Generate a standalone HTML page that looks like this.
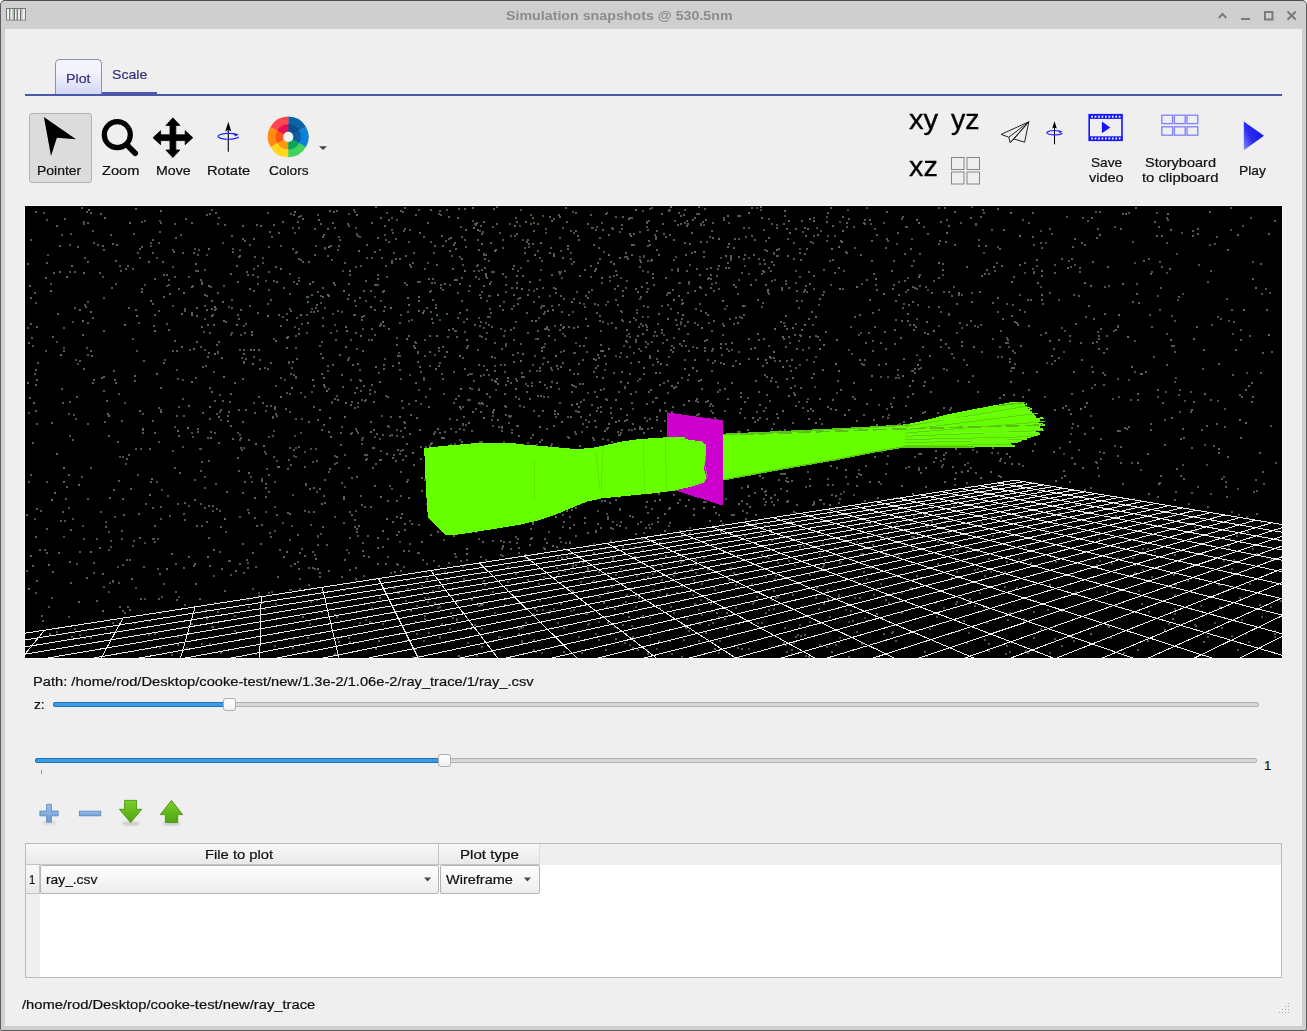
<!DOCTYPE html>
<html><head><meta charset="utf-8"><title>Simulation snapshots</title>
<style>

html,body{margin:0;padding:0;background:#ffffff;}
body{width:1307px;height:1031px;overflow:hidden;font-family:"Liberation Sans", sans-serif;}
#win{position:absolute;left:0;top:0;width:1307px;height:1031px;box-sizing:border-box;background:#cfcfcf;border:1px solid #5c5c5c;border-top-color:#4f4f4f;border-radius:5px 5px 2px 2px;overflow:hidden;}
#win *{box-sizing:border-box;}
.a{position:absolute;}
.t{position:absolute;white-space:nowrap;transform-origin:0 50%;}
#content{position:absolute;left:4px;top:28px;width:1297px;height:997px;background:#efefef;}
svg{position:absolute;overflow:visible;}

</style></head>
<body>
<div id="win">
<div class="a" style="left:-1px;top:-1px;width:1307px;height:1031px">
<div class="a" style="left:5px;top:29px;width:1297px;height:997px;background:#efefef"></div>
<svg style="left:6px;top:8px" width="20" height="13" viewBox="0 0 20 13">
<rect x="0.5" y="0.5" width="19" height="11.5" fill="#e9e9e9" stroke="#777" stroke-width="1"/>
<rect x="1.2" y="1" width="1.8" height="10.5" fill="#f4f2f6"/>
<rect x="3.1" y="0.5" width="1.4" height="11.5" fill="#74708a"/>
<rect x="4.6" y="1" width="1.6" height="10.5" fill="#f0ece8"/>
<rect x="6.2" y="1" width="1.5" height="10.5" fill="#a8d8a8"/>
<rect x="7.7" y="0.5" width="1.3" height="11.5" fill="#6c6c6c"/>
<rect x="9.2" y="1" width="1.4" height="10.5" fill="#eee"/>
<rect x="10.6" y="0.5" width="1.6" height="11.5" fill="#8a708a"/>
<rect x="12.3" y="1" width="1.6" height="10.5" fill="#f1eef1"/>
<rect x="14" y="0.5" width="1.3" height="11.5" fill="#6e6e6e"/>
<rect x="15.4" y="1" width="1.5" height="10.5" fill="#c4cad8"/>
<rect x="17" y="1" width="1.8" height="10.5" fill="#f2eee8"/>
</svg>
<svg style="left:1210px;top:5px" width="92" height="20" viewBox="1210 5 92 20" fill="none" stroke="#7b7b7b" stroke-width="2">
<path d="M1218.7 18 L1222.5 14 L1226.3 18" stroke-linecap="butt"/>
<path d="M1241 19 H1250"/>
<rect x="1265" y="12" width="7.5" height="7.5"/>
<path d="M1287.5 11.5 L1295.8 19.8 M1295.8 11.5 L1287.5 19.8"/>
</svg>
<div class="a" style="left:25px;top:94px;width:1257px;height:2px;background:#4a56a8"></div>
<div class="a" style="left:102px;top:92px;width:55px;height:2px;background:#4a56a8"></div>
<div class="a" style="left:55px;top:59px;width:47px;height:35px;border:1px solid #8d8fb4;border-bottom:none;border-radius:5px 5px 0 0;background:linear-gradient(#f5f5fd 0%,#f1f1fc 40%,#d4d7f4 100%)"></div>
<div class="a" style="left:29px;top:113px;width:63px;height:70px;border:1px solid #b4b4b4;border-radius:3px;background:#dcdcdc"></div>
<div class="a" style="left:24px;top:205px;width:1259px;height:454px;background:#fbfbfb"></div>
<svg style="left:0;top:0" width="1307" height="200" viewBox="0 0 1307 200">
<defs><filter id="blur1" x="-10%" y="-10%" width="120%" height="120%"><feGaussianBlur stdDeviation="0.75"/></filter></defs>
<path d="M43.9 117.1 L76 139.2 L56.9 137.8 L51 156.1 Z" fill="#000" filter="url(#blur1)"/>
<circle cx="117.3" cy="134.7" r="13" fill="none" stroke="#000" stroke-width="5.2"/>
<path d="M127 145 L135.2 153.2" stroke="#000" stroke-width="5.6" stroke-linecap="round"/>
<path d="M172.9 117.8 L179.9 125.4 L175.8 125.4 L175.8 134.8 L185.2 134.8 L185.2 130.7 L192.8 137.7 L185.2 144.7 L185.2 140.6 L175.8 140.6 L175.8 150.0 L179.9 150.0 L172.9 157.6 L165.9 150.0 L170.0 150.0 L170.0 140.6 L160.6 140.6 L160.6 144.7 L153.0 137.7 L160.6 130.7 L160.6 134.8 L170.0 134.8 L170.0 125.4 L165.9 125.4 Z" fill="#000" stroke="#000" stroke-width="0.8" stroke-linejoin="round"/>
<g>
<path d="M228.3 151.8 V126" stroke="#000" stroke-width="1.1"/>
<path d="M228.3 121.8 L231.3 131.5 L228.3 129.8 L225.3 131.5 Z" fill="#000"/>
<path d="M235.5 134.2 A10.4 2.9 0 1 0 238.7 136.9" fill="none" stroke="#2222ff" stroke-width="1.2"/>
<path d="M233 132.8 L238.9 134.6 L235.2 136.6 Z" fill="#2222ff"/>
</g>

<path d="M288.2 136.9 L288.20 116.50 A20.4 20.4 0 0 1 305.96 126.85 Z" fill="#0b62a8"/>
<path d="M288.2 136.9 L305.87 126.70 A20.4 20.4 0 0 1 305.78 147.25 Z" fill="#0d80d8"/>
<path d="M288.2 136.9 L305.87 147.10 A20.4 20.4 0 0 1 288.02 157.30 Z" fill="#41d45c"/>
<path d="M288.2 136.9 L288.20 157.30 A20.4 20.4 0 0 1 270.44 146.95 Z" fill="#ffd81c"/>
<path d="M288.2 136.9 L270.53 147.10 A20.4 20.4 0 0 1 270.62 126.55 Z" fill="#ff8c0f"/>
<path d="M288.2 136.9 L270.53 126.70 A20.4 20.4 0 0 1 288.38 116.50 Z" fill="#ff4650"/>
<path d="M288.2 136.9 L288.20 124.30 A12.6 12.6 0 0 1 299.17 130.70 Z" fill="#0c4f88"/>
<path d="M288.2 136.9 L299.11 130.60 A12.6 12.6 0 0 1 299.06 143.29 Z" fill="#0d5fa0"/>
<path d="M288.2 136.9 L299.11 143.20 A12.6 12.6 0 0 1 288.09 149.50 Z" fill="#10a35a"/>
<path d="M288.2 136.9 L288.20 149.50 A12.6 12.6 0 0 1 277.23 143.10 Z" fill="#ff9a10"/>
<path d="M288.2 136.9 L277.29 143.20 A12.6 12.6 0 0 1 277.34 130.51 Z" fill="#ff5418"/>
<path d="M288.2 136.9 L277.29 130.60 A12.6 12.6 0 0 1 288.31 124.30 Z" fill="#e61050"/>
<circle cx="288.2" cy="136.9" r="5.1" fill="#f4f4f4"/>
<path d="M319 146.3 L327 146.3 L323 150 Z" fill="#444"/>
</svg>
<svg style="left:0;top:0" width="1307" height="200" viewBox="0 0 1307 200">
<rect x="951.5" y="157.5" width="12.5" height="12" fill="none" stroke="#858585" stroke-width="1"/>
<rect x="967.0" y="157.5" width="12.5" height="12" fill="none" stroke="#858585" stroke-width="1"/>
<rect x="951.5" y="172.0" width="12.5" height="12" fill="none" stroke="#858585" stroke-width="1"/>
<rect x="967.0" y="172.0" width="12.5" height="12" fill="none" stroke="#858585" stroke-width="1"/>
<path d="M1028.8 121.8 L1001 134.4 L1008.8 137.2 L1010.2 142.6 L1014 139 L1024.6 142.2 Z M1028.8 121.8 L1008.8 137.2 M1028.8 121.8 L1010.2 142.6 M1028.8 121.8 L1014 139" fill="none" stroke="#222" stroke-width="1" stroke-linejoin="round"/>
<path d="M1054.5 144.3 V125" stroke="#000" stroke-width="1"/>
<path d="M1054.5 121.3 L1056.8 128.6 L1054.5 127.4 L1052.2 128.6 Z" fill="#000"/>
<path d="M1060 131.2 A7.9 2.1 0 1 0 1062.4 133.2" fill="none" stroke="#2222ff" stroke-width="1.1"/>
<path d="M1058 130.2 L1062.6 131.6 L1059.8 133.2 Z" fill="#2222ff"/>
<rect x="1089.2" y="114.7" width="32.8" height="25.6" fill="none" stroke="#1414ff" stroke-width="1.6"/>
<rect x="1089" y="114.5" width="33.2" height="4.4" fill="#1414ff"/><rect x="1089" y="136.3" width="33.2" height="4.4" fill="#1414ff"/>
<rect x="1091.20" y="115.7" width="1.7" height="2" fill="#eef"/><rect x="1091.20" y="137.5" width="1.7" height="2" fill="#eef"/>
<rect x="1094.65" y="115.7" width="1.7" height="2" fill="#eef"/><rect x="1094.65" y="137.5" width="1.7" height="2" fill="#eef"/>
<rect x="1098.10" y="115.7" width="1.7" height="2" fill="#eef"/><rect x="1098.10" y="137.5" width="1.7" height="2" fill="#eef"/>
<rect x="1101.55" y="115.7" width="1.7" height="2" fill="#eef"/><rect x="1101.55" y="137.5" width="1.7" height="2" fill="#eef"/>
<rect x="1105.00" y="115.7" width="1.7" height="2" fill="#eef"/><rect x="1105.00" y="137.5" width="1.7" height="2" fill="#eef"/>
<rect x="1108.45" y="115.7" width="1.7" height="2" fill="#eef"/><rect x="1108.45" y="137.5" width="1.7" height="2" fill="#eef"/>
<rect x="1111.90" y="115.7" width="1.7" height="2" fill="#eef"/><rect x="1111.90" y="137.5" width="1.7" height="2" fill="#eef"/>
<rect x="1115.35" y="115.7" width="1.7" height="2" fill="#eef"/><rect x="1115.35" y="137.5" width="1.7" height="2" fill="#eef"/>
<rect x="1118.80" y="115.7" width="1.7" height="2" fill="#eef"/><rect x="1118.80" y="137.5" width="1.7" height="2" fill="#eef"/>
<path d="M1101.9 121.5 L1110.3 127.4 L1101.9 133.3 Z" fill="#1414ff"/>
<rect x="1161.8" y="115.2" width="10.8" height="8.4" fill="none" stroke="#6c6cff" stroke-width="1.3" opacity="0.85"/>
<rect x="1174.4" y="115.2" width="10.8" height="8.4" fill="none" stroke="#6c6cff" stroke-width="1.3" opacity="0.85"/>
<rect x="1187.0" y="115.2" width="10.8" height="8.4" fill="none" stroke="#6c6cff" stroke-width="1.3" opacity="0.85"/>
<rect x="1161.8" y="126.8" width="10.8" height="8.4" fill="none" stroke="#6c6cff" stroke-width="1.3" opacity="0.85"/>
<rect x="1174.4" y="126.8" width="10.8" height="8.4" fill="none" stroke="#6c6cff" stroke-width="1.3" opacity="0.85"/>
<rect x="1187.0" y="126.8" width="10.8" height="8.4" fill="none" stroke="#6c6cff" stroke-width="1.3" opacity="0.85"/>
<defs><linearGradient id="pg" x1="1" y1="0.3" x2="0" y2="1"><stop offset="0" stop-color="#1515f5"/><stop offset="0.55" stop-color="#2a2af0"/><stop offset="1" stop-color="#8a8af8"/></linearGradient></defs>
<path d="M1243.8 121.5 L1264 135.8 L1243.8 150.2 Z" fill="url(#pg)"/>
</svg>
<div class="a" style="left:53px;top:702px;width:1206px;height:5px;border:1px solid #b2b2b2;border-radius:2px;background:linear-gradient(#d0d0d0,#dedede)"></div>
<div class="a" style="left:53px;top:702px;width:176px;height:5px;border:1px solid #2273b5;border-radius:2px;background:#3d9ae4"></div>
<div class="a" style="left:223px;top:698px;width:13px;height:13px;border:1px solid #aeaeae;border-radius:3px;background:linear-gradient(#ffffff,#f0f0f0)"></div>
<div class="a" style="left:35px;top:758px;width:1222px;height:5px;border:1px solid #b2b2b2;border-radius:2px;background:linear-gradient(#d0d0d0,#dedede)"></div>
<div class="a" style="left:35px;top:758px;width:409px;height:5px;border:1px solid #2273b5;border-radius:2px;background:#3d9ae4"></div>
<div class="a" style="left:438px;top:754px;width:13px;height:13px;border:1px solid #aeaeae;border-radius:3px;background:linear-gradient(#ffffff,#f0f0f0)"></div>
<div class="a" style="left:41px;top:770px;width:1px;height:4px;background:#999"></div>
<svg style="left:0;top:795px" width="200" height="35" viewBox="0 795 200 35">
<defs>
<linearGradient id="bl" x1="0" y1="0" x2="0" y2="1"><stop offset="0" stop-color="#9fc0e6"/><stop offset="1" stop-color="#6f9bd2"/></linearGradient>
<linearGradient id="gr" x1="0" y1="0" x2="0" y2="1"><stop offset="0" stop-color="#7ccf2a"/><stop offset="1" stop-color="#4fa512"/></linearGradient>
<filter id="sh" x="-20%" y="-20%" width="140%" height="160%"><feGaussianBlur stdDeviation="1.2"/></filter>
</defs>
<ellipse cx="49" cy="823" rx="7" ry="1.6" fill="#000" opacity="0.12" filter="url(#sh)"/>
<ellipse cx="130.6" cy="823.5" rx="9" ry="1.8" fill="#000" opacity="0.18" filter="url(#sh)"/>
<ellipse cx="171.5" cy="823.5" rx="9" ry="1.8" fill="#000" opacity="0.18" filter="url(#sh)"/>
<path d="M46.6 804.3 H51.4 V811.1 H58.2 V815.8 H51.4 V822.1 H46.6 V815.8 H39.9 V811.1 H46.6 Z" fill="url(#bl)" stroke="#5d8bc8" stroke-width="0.9"/>
<rect x="79.4" y="811.2" width="21.3" height="4.6" fill="url(#bl)" stroke="#5d8bc8" stroke-width="0.9"/>
<path d="M124.6 800.4 H136.6 V809.3 H141.8 L130.6 822.6 L119.4 809.3 H124.6 Z" fill="url(#gr)" stroke="#4a9410" stroke-width="0.9" stroke-linejoin="round"/>
<path d="M171.5 800.4 L182.7 814.6 H177.7 V822.4 H165.4 V814.6 H160.3 Z" fill="url(#gr)" stroke="#4a9410" stroke-width="0.9" stroke-linejoin="round"/>
</svg>
<div class="a" style="left:25px;top:843px;width:1257px;height:135px;border:1px solid #b9b9b9;background:#fff"></div>
<div class="a" style="left:26px;top:844px;width:1255px;height:21px;background:#efefef"></div>
<div class="a" style="left:26px;top:844px;width:413px;height:21px;background:linear-gradient(#f8f8f8,#e9e9e9);border-right:1px solid #c4c4c4;border-bottom:1px solid #c4c4c4"></div>
<div class="a" style="left:439px;top:844px;width:101px;height:21px;background:linear-gradient(#f8f8f8,#e9e9e9);border-right:1px solid #dcdcdc;border-bottom:1px solid #c4c4c4"></div>
<div class="a" style="left:26px;top:865px;width:14px;height:112px;background:#efefef"></div>
<div class="a" style="left:26px;top:865px;width:14px;height:29px;background:linear-gradient(#f8f8f8,#e9e9e9);border-right:1px solid #c4c4c4;border-bottom:1px solid #c4c4c4"></div>
<div class="a" style="left:40px;top:865px;width:399px;height:29px;border:1px solid #b3b3b3;border-radius:2px;background:linear-gradient(#ffffff,#ededed)"></div>
<div class="a" style="left:440px;top:865px;width:100px;height:29px;border:1px solid #b3b3b3;border-radius:2px;background:linear-gradient(#ffffff,#ededed)"></div>
<svg style="left:420px;top:875px" width="120" height="10" viewBox="420 875 120 10"><path d="M424 877.6 H431.2 L427.6 881.4 Z M523.8 877.6 H531 L527.4 881.4 Z" fill="#4a4a4a"/></svg>
<svg style="left:0;top:0" width="1307" height="1031" viewBox="0 0 1307 1031" pointer-events="none"><rect x="1288" y="1003" width="1" height="1" fill="#a8a8a8"/><rect x="1285" y="1006" width="1" height="1" fill="#a8a8a8"/><rect x="1288" y="1006" width="1" height="1" fill="#a8a8a8"/><rect x="1282" y="1009" width="1" height="1" fill="#a8a8a8"/><rect x="1285" y="1009" width="1" height="1" fill="#a8a8a8"/><rect x="1288" y="1009" width="1" height="1" fill="#a8a8a8"/><rect x="1279" y="1012" width="1" height="1" fill="#a8a8a8"/><rect x="1282" y="1012" width="1" height="1" fill="#a8a8a8"/><rect x="1285" y="1012" width="1" height="1" fill="#a8a8a8"/><rect x="1288" y="1012" width="1" height="1" fill="#a8a8a8"/></svg>

<svg style="left:25px;top:206px;overflow:hidden" width="1257" height="452" viewBox="0 0 1257 452" shape-rendering="crispEdges">
<rect x="0" y="0" width="1257" height="452" fill="#000"/>
<path d="M663 77h2M457 322h2M309 118h2M652 64h2M902 83h2M319 280h2M214 43h2M871 37h2M623 318h2M995 201h2M876 386h2M430 192h2M794 133h2M383 114h2M743 139h2M364 229h2M943 395h2M617 64h2M748 46h2M1036 121h2M166 226h2M270 250h2M552 205h2M508 84h2M1086 357h2M1157 87h2M58 15h2M478 235h2M374 335h2M872 347h2M285 242h2M356 51h2M863 396h2M378 215h2M520 26h2M167 79h2M706 143h2M774 42h2M114 51h2M749 73h2M934 247h2M638 128h2M656 417h2M510 445h2M664 221h2M929 324h2M544 347h2M205 128h2M880 199h2M814 431h2M921 319h2M450 202h2M586 21h2M483 278h2M503 40h2M612 443h2M309 249h2M203 100h2M10 96h2M526 237h2M57 319h2M31 135h2M547 5h2M839 411h2M517 9h2M656 171h2M699 102h2M412 401h2M330 304h2M503 83h2M479 124h2M624 2h2M495 61h2M332 200h2M295 96h2M286 102h2M248 132h2M393 3h2M667 140h2M355 118h2M972 246h2M167 230h2M1205 23h2M1148 139h2M354 43h2M980 447h2M865 197h2M116 15h2M1141 66h2M384 337h2M131 51h2M1149 407h2M1165 185h2M443 262h2M885 317h2M373 146h2M562 186h2M44 38h2M913 119h2M510 132h2M179 143h2M1113 384h2M483 216h2M141 79h2M51 357h2M331 224h2M568 337h2M594 150h2M523 325h2M678 18h2M272 355h2M233 386h2M47 115h2M292 329h2M570 427h2M547 105h2M891 112h2M467 206h2M65 431h2M593 290h2M809 29h2M414 113h2M92 360h2M302 164h2M107 62h2M315 414h2M311 124h2M170 64h2M838 320h2M1046 221h2M1024 446h2M446 167h2M404 159h2M1149 175h2M1021 156h2M384 23h2M268 249h2M1185 287h2M751 18h2M952 344h2M2 121h2M604 130h2M3 206h2M1109 134h2M511 164h2M1163 297h2M782 419h2M179 112h2M915 254h2M795 316h2M656 380h2M267 288h2M459 245h2M1066 181h2M9 312h2M507 158h2M136 390h2M1008 65h2M409 148h2M719 99h2M1157 258h2M874 294h2M488 133h2M240 74h2M1085 431h2M579 239h2M264 102h2M330 99h2M536 71h2M546 365h2M550 136h2M972 40h2M492 64h2M453 64h2M307 107h2M360 189h2M461 126h2M618 50h2M317 64h2M820 45h2M392 346h2M573 415h2M654 76h2M846 319h2M1063 311h2M363 220h2M1048 310h2M470 183h2M112 268h2M657 276h2M781 153h2M789 180h2M470 251h2M972 150h2M270 241h2M727 397h2M740 370h2M485 209h2M636 99h2M617 268h2M1015 128h2M917 258h2M932 174h2M777 25h2M861 257h2M611 103h2M684 199h2M398 434h2M999 66h2M524 89h2M349 90h2M174 242h2M829 41h2M467 219h2M413 381h2M273 71h2M99 196h2M841 1h2M891 148h2M961 416h2M1039 124h2M218 156h2M1074 245h2M136 283h2M746 393h2M572 304h2M295 147h2M655 356h2M637 136h2M390 442h2M271 45h2M818 285h2M399 391h2M43 301h2M1087 192h2M456 292h2M876 12h2M828 288h2M497 33h2M622 447h2M788 155h2M356 209h2M1181 258h2M169 42h2M257 316h2M882 71h2M1063 371h2M723 21h2M673 282h2M480 289h2M121 442h2M572 98h2M418 333h2M860 267h2M347 396h2M1249 424h2M349 230h2M176 75h2M1159 194h2M280 278h2M490 115h2M469 151h2M599 50h2M454 24h2M653 259h2M784 415h2M954 386h2M1015 24h2M981 131h2M535 145h2M529 133h2M1071 256h2M736 100h2M50 153h2M323 7h2M585 344h2M541 255h2M886 32h2M316 105h2M880 85h2M292 330h2M264 67h2M519 137h2M412 314h2M197 36h2M1109 56h2M604 438h2M331 28h2M633 434h2M671 7h2M84 376h2M456 85h2M1156 26h2M311 256h2M321 343h2M299 42h2M461 199h2M614 50h2M332 196h2M522 190h2M1192 194h2M164 143h2M815 287h2M656 112h2M384 168h2M693 446h2M604 140h2M468 65h2M822 3h2M622 110h2M303 182h2M958 46h2M311 189h2M719 59h2M251 254h2M338 369h2M1074 354h2M997 259h2M437 360h2M1093 190h2M631 442h2M188 165h2M933 239h2M281 126h2M447 14h2M151 163h2M240 247h2M466 213h2M607 202h2M580 98h2M80 315h2M454 197h2M264 383h2M782 192h2M712 441h2M749 372h2M396 379h2M598 139h2M434 233h2M181 48h2M1204 332h2M359 28h2M275 186h2M366 282h2M371 13h2M782 265h2M1017 97h2M1175 399h2M52 157h2M215 128h2M947 243h2M793 98h2M917 68h2M248 224h2M650 264h2M514 394h2M1203 114h2M465 75h2M715 202h2M395 197h2M87 375h2M1115 263h2M836 338h2M770 117h2M1045 227h2M710 154h2M494 19h2M110 381h2M829 391h2M216 151h2M1007 62h2M855 342h2M432 395h2M713 73h2M515 63h2M340 94h2M94 250h2M617 4h2M157 173h2M535 65h2M340 413h2M713 145h2M571 20h2M823 143h2M736 416h2M200 325h2M155 28h2M1141 11h2M391 399h2M299 101h2M921 209h2M946 0h2M416 167h2M520 22h2M670 398h2M655 284h2M222 356h2M685 204h2M1020 36h2M994 88h2M431 394h2M788 11h2M414 312h2M603 127h2M590 368h2M582 117h2M1132 190h2M1092 172h2M371 357h2M279 245h2M228 196h2M624 411h2M636 328h2M1048 88h2M58 332h2M249 324h2M257 110h2M306 195h2M701 142h2M826 147h2M855 277h2M558 97h2M266 319h2M833 263h2M801 10h2M833 128h2M746 334h2M492 92h2M268 75h2M227 382h2M855 331h2M856 245h2M882 83h2M36 28h2M147 99h2M943 426h2M195 213h2M550 257h2M486 223h2M601 74h2M393 183h2M840 229h2M269 229h2M1011 59h2M226 275h2M701 99h2M723 67h2M545 404h2M267 21h2M135 203h2M384 314h2M648 406h2M550 180h2M429 237h2M790 150h2M764 136h2M83 385h2M720 30h2M590 149h2M629 378h2M853 198h2M618 49h2M354 232h2M579 163h2M617 110h2M375 244h2M306 196h2M703 16h2M588 69h2M533 182h2M1015 80h2M323 346h2M632 117h2M654 324h2M479 257h2M723 442h2M419 365h2M463 168h2M416 324h2M612 272h2M424 78h2M688 242h2M1198 270h2M516 446h2M265 359h2M1206 305h2M475 250h2M1212 282h2M119 336h2M1207 127h2M389 135h2M119 392h2M612 174h2M480 139h2M147 60h2M627 158h2M458 47h2M1151 47h2M739 43h2M675 393h2M744 242h2M38 330h2M408 354h2M686 77h2M43 410h2M1103 173h2M457 25h2M561 259h2M341 252h2M276 117h2M134 14h2M1221 166h2M823 415h2M584 74h2M1038 247h2M537 127h2M836 77h2M518 370h2M275 226h2M1150 171h2M1155 344h2M773 195h2M526 421h2M802 272h2M753 238h2M453 111h2M755 282h2M983 140h2M942 256h2M1038 145h2M1179 238h2M1198 354h2M966 246h2M872 226h2M312 43h2M814 15h2M656 139h2M500 177h2M240 204h2M682 363h2M655 115h2M1065 209h2M153 390h2M442 168h2M731 1h2M795 24h2M563 275h2M22 48h2M638 356h2M269 120h2M595 71h2M535 335h2M738 292h2M820 403h2M1244 86h2M119 78h2M513 111h2M420 313h2M464 110h2M1152 93h2M1041 10h2M812 236h2M362 332h2M25 77h2M695 51h2M264 205h2M77 70h2M431 412h2M963 444h2M811 186h2M1049 58h2" stroke="#474d4d" stroke-width="2" fill="none" transform="translate(0,1)"/>
<path d="M593 214h2M762 49h2M703 373h2M311 250h2M191 138h2M715 186h2M810 237h2M352 72h2M249 200h2M508 258h2M613 155h2M540 1h2M1030 274h2M499 46h2M458 79h2M405 3h2M906 86h2M573 41h2M648 141h2M481 382h2M1039 269h2M1122 247h2M486 81h2M926 89h2M535 118h2M434 200h2M219 126h2M588 244h2M110 2h2M609 222h2M641 133h2M430 350h2M782 204h2M656 245h2M404 253h2M649 365h2M249 439h2M813 61h2M526 163h2M660 421h2M359 100h2M1193 157h2M458 316h2M746 55h2M349 185h2M844 93h2M248 74h2M346 16h2M595 202h2M687 206h2M636 7h2M657 96h2M508 433h2M344 183h2M519 122h2M322 153h2M1047 217h2M463 277h2M918 201h2M294 139h2M264 307h2M431 73h2M467 205h2M609 350h2M648 33h2M493 422h2M941 60h2M416 29h2M423 264h2M457 335h2M335 184h2M621 76h2M1095 256h2M541 15h2M503 37h2M357 417h2M675 35h2M701 422h2M298 171h2M513 377h2M591 68h2M633 48h2M736 11h2M931 395h2M894 68h2M776 14h2M949 399h2M27 365h2M622 39h2M1097 7h2M515 189h2M538 445h2M835 48h2M616 332h2M39 12h2M406 76h2M171 135h2M975 270h2M887 80h2M331 325h2M291 98h2M117 223h2M294 282h2M78 43h2M273 52h2M910 244h2M329 313h2M530 82h2M1207 168h2M58 162h2M600 363h2M861 5h2M421 263h2M459 52h2M323 77h2M327 158h2M495 421h2M339 300h2M469 174h2M248 18h2M435 354h2M570 153h2M193 135h2M408 227h2M352 331h2M628 78h2M103 101h2M1064 305h2M620 300h2M562 326h2M817 236h2M1139 238h2M1117 342h2M673 434h2M212 251h2M1109 358h2M599 214h2M984 155h2M702 192h2M841 372h2M876 114h2M560 272h2M410 101h2M740 350h2M1191 217h2M1060 110h2M672 118h2M96 214h2M427 411h2M185 225h2M809 253h2M663 144h2M1057 261h2M263 155h2M240 290h2M89 173h2M1134 276h2M642 112h2M713 50h2M381 237h2M74 341h2M714 9h2M608 38h2M478 129h2M54 345h2M523 406h2M867 82h2M466 120h2M536 293h2M1038 264h2M455 91h2M732 127h2M90 176h2M1116 397h2M425 267h2M719 195h2M920 35h2M213 50h2M1116 167h2M734 198h2M288 105h2M439 162h2M878 215h2M974 191h2M336 113h2M799 353h2M65 6h2M946 95h2M253 108h2M684 314h2M267 155h2M695 357h2M252 260h2M41 280h2M322 92h2M689 383h2M771 142h2M175 264h2M151 144h2M1075 122h2M98 308h2M358 158h2M989 215h2M1220 183h2M961 63h2M316 168h2M602 52h2M886 59h2M844 13h2M146 347h2M884 118h2M659 162h2M402 16h2M926 147h2M838 365h2M511 252h2M184 437h2M783 112h2M813 390h2M815 34h2M569 64h2M644 86h2M451 16h2M288 281h2M705 344h2M689 154h2M960 286h2M592 225h2M705 51h2M904 149h2M1112 193h2M138 68h2M535 276h2M506 331h2M952 297h2M1109 366h2M535 89h2M759 119h2M511 247h2M995 222h2M514 235h2M524 404h2M21 322h2M1063 99h2M584 70h2M231 319h2M608 27h2M283 361h2M680 106h2M493 229h2M115 392h2M546 178h2M377 5h2M485 250h2M881 234h2M502 298h2M350 0h2M562 119h2M882 107h2M984 406h2M930 266h2M250 207h2M1151 262h2M526 68h2M346 178h2M893 263h2M678 45h2M600 395h2M1067 136h2M857 229h2M206 29h2M236 274h2M384 227h2M75 7h2M538 342h2M186 102h2M409 39h2M774 46h2M1053 89h2M360 357h2M268 243h2M209 424h2M312 432h2M722 223h2M508 24h2M159 102h2M1002 446h2M1167 29h2M507 37h2M292 338h2M615 315h2M748 151h2M1158 352h2M614 220h2M769 358h2M650 180h2M813 435h2M1005 356h2M68 173h2M288 305h2M790 129h2M784 279h2M176 77h2M288 200h2M553 157h2M414 431h2M769 128h2M805 202h2M586 235h2M604 115h2M821 46h2M916 311h2M766 230h2M514 161h2M355 253h2M686 404h2M778 243h2M28 66h2M380 49h2M471 172h2M144 87h2M911 410h2M514 164h2M648 260h2M183 146h2M783 212h2M676 211h2M740 406h2M502 88h2M959 433h2M534 10h2M1046 187h2M646 256h2M213 203h2M514 175h2M337 144h2M761 172h2M600 258h2M521 122h2M284 417h2M483 209h2M797 360h2M882 190h2M663 168h2M873 88h2M685 197h2M283 378h2M810 203h2M546 303h2M528 81h2M117 226h2M541 350h2M390 415h2M494 285h2M338 179h2M153 229h2M1070 255h2M944 392h2M62 16h2M642 98h2M437 217h2M550 24h2M625 257h2M477 340h2M301 338h2M245 156h2M343 350h2M392 146h2M538 421h2M547 359h2M937 323h2M325 227h2M617 409h2M667 13h2M798 297h2M1095 22h2M597 10h2M1100 7h2M133 392h2M331 181h2M836 437h2M892 391h2M796 249h2M948 206h2M705 361h2M337 344h2M733 52h2M532 416h2M1226 176h2M1227 190h2M363 35h2M627 67h2M168 46h2M618 251h2M731 390h2M530 86h2M341 38h2M238 395h2M362 190h2M1132 183h2M468 446h2M906 315h2M379 323h2M475 271h2M203 205h2M348 195h2M47 233h2M695 325h2M319 56h2M490 367h2M1067 165h2M941 118h2M309 192h2M827 190h2M1213 308h2M469 283h2M847 144h2M629 348h2M983 385h2M480 208h2M1169 320h2M223 400h2M413 359h2M452 305h2M214 233h2M577 171h2M358 104h2M36 182h2M298 28h2M205 187h2M841 73h2M797 163h2M302 159h2M889 162h2M622 306h2M915 15h2M84 291h2M67 111h2M488 155h2M579 149h2M288 179h2M888 309h2M663 424h2M571 106h2M989 115h2M912 335h2M215 103h2M390 176h2M705 49h2M581 193h2M81 194h2M953 285h2M923 107h2M486 102h2M331 322h2M394 160h2M578 450h2M627 195h2M354 175h2M729 286h2M1003 119h2M559 100h2M662 127h2M302 22h2M555 210h2M589 82h2M444 318h2M511 404h2M765 314h2M631 213h2M975 311h2M557 177h2M1073 142h2M352 357h2M1093 299h2M283 55h2M558 370h2M1036 439h2M1132 290h2M567 375h2M602 176h2M552 29h2M574 109h2M492 146h2M917 218h2M1011 165h2M268 8h2M702 56h2M897 140h2M252 370h2M460 69h2M34 39h2M431 130h2M525 161h2M906 301h2M594 51h2M621 123h2M1118 54h2M491 219h2M502 373h2M851 352h2M323 88h2M1056 153h2M279 349h2M957 3h2M548 92h2M752 180h2M794 192h2M671 164h2M260 202h2M237 196h2M313 39h2M1007 30h2M436 30h2M730 174h2M20 71h2M679 134h2M102 400h2M329 186h2M732 93h2M68 36h2M232 106h2M869 137h2M316 220h2M753 396h2M415 241h2M956 316h2M1220 427h2M159 313h2M516 54h2M398 30h2M953 39h2M403 426h2M186 185h2M692 62h2M141 68h2M219 275h2M1090 123h2M709 248h2M853 158h2M967 96h2M902 27h2M303 364h2M129 72h2M496 310h2M129 427h2M100 62h2M193 236h2M732 213h2M1184 5h2M628 348h2M524 46h2M11 173h2M190 6h2M333 319h2M460 48h2M182 118h2M1043 203h2M557 153h2M1079 107h2M419 77h2M421 373h2M265 167h2M682 194h2M656 97h2M945 11h2M552 167h2M138 90h2M671 287h2M794 347h2M217 32h2M519 257h2M878 152h2M474 99h2M380 434h2M469 136h2M418 231h2M114 42h2M329 320h2M429 347h2M5 117h2M172 64h2M449 118h2M835 268h2M234 162h2M615 90h2M614 53h2" stroke="#545b58" stroke-width="2" fill="none" transform="translate(0,1)"/>
<path d="M452 23h2M740 153h2M779 118h2M542 245h2M375 311h2M669 45h2M224 82h2M593 228h2M470 175h2M1012 76h2M470 43h2M111 109h2M514 220h2M298 178h2M320 196h2M3 382h2M846 298h2M305 230h2M126 272h2M439 358h2M713 297h2M668 308h2M802 236h2M163 199h2M658 134h2M1037 201h2M345 225h2M369 365h2M83 209h2M588 57h2M303 225h2M605 29h2M223 266h2M510 114h2M699 412h2M189 100h2M788 14h2M82 207h2M1145 133h2M412 325h2M959 291h2M297 151h2M290 352h2M693 32h2M811 133h2M436 235h2M1024 134h2M674 80h2M1112 256h2M530 310h2M5 91h2M458 374h2M749 122h2M1059 76h2M1168 132h2M525 180h2M603 410h2M405 237h2M2 176h2M469 44h2M180 403h2M309 408h2M798 138h2M332 157h2M227 157h2M716 442h2M447 1h2M515 36h2M626 53h2M691 406h2M783 450h2M197 95h2M1146 381h2M701 406h2M361 312h2M522 155h2M266 181h2M1074 28h2M135 205h2M116 85h2M35 148h2M673 174h2M1147 412h2M104 16h2M791 242h2M106 372h2M353 434h2M1102 130h2M850 72h2M965 265h2M790 216h2M79 11h2M230 237h2M358 84h2M968 60h2M604 27h2M595 175h2M984 324h2M26 293h2M757 130h2M489 19h2M188 343h2M552 249h2M590 215h2M233 389h2M404 277h2M381 132h2M745 252h2M929 272h2M831 80h2M319 210h2M794 142h2M982 413h2M323 431h2M740 78h2M568 346h2M1142 7h2M1055 202h2M639 307h2M689 442h2M500 15h2M708 78h2M131 167h2M528 49h2M671 426h2M211 118h2M546 95h2M530 149h2M421 145h2M304 262h2M745 291h2M226 128h2M350 442h2M695 137h2M293 13h2M653 89h2M38 275h2M255 190h2M273 127h2M312 193h2M253 260h2M674 417h2M5 349h2M262 130h2M663 194h2M967 241h2M1067 221h2M65 105h2M750 332h2M429 252h2M810 289h2M482 171h2M978 188h2M1016 64h2M412 293h2M663 265h2M242 109h2M1193 242h2M189 147h2M490 182h2M1065 427h2M372 385h2M629 365h2M579 224h2M425 31h2M986 75h2M503 427h2M893 70h2M99 118h2M410 276h2M448 21h2M199 312h2M589 402h2M313 435h2M374 210h2M540 242h2M441 133h2M577 144h2M410 162h2M580 443h2M166 108h2M77 404h2M741 355h2M441 347h2M296 297h2M292 362h2M46 59h2M536 215h2M908 124h2M511 283h2M303 89h2M892 158h2M576 71h2M694 249h2M218 155h2M648 181h2M471 415h2M1212 28h2M187 420h2M893 16h2M522 104h2M748 145h2M606 38h2M851 442h2M443 216h2M1092 224h2M877 169h2M238 239h2M635 157h2M757 204h2M922 213h2M886 330h2M583 142h2M537 281h2M458 211h2M887 174h2M851 218h2M912 357h2M985 175h2M612 129h2M601 262h2M1194 400h2M616 222h2M732 152h2M768 305h2M433 318h2M963 202h2M764 26h2M703 37h2M282 444h2M496 82h2M335 129h2M396 335h2M459 257h2M958 400h2M1093 108h2M846 169h2M657 108h2M902 127h2M603 12h2M365 101h2M393 90h2M1036 404h2M941 436h2M435 182h2M646 179h2M376 307h2M618 161h2M23 358h2M109 169h2M461 187h2M583 48h2M488 257h2M639 324h2M669 234h2M393 104h2M439 64h2M358 383h2M769 188h2M742 83h2M930 242h2M786 226h2M357 115h2M1030 355h2M612 85h2M495 154h2M134 406h2M767 171h2M544 336h2M114 204h2M1112 187h2M434 149h2M468 203h2M551 197h2M891 13h2M287 173h2M412 222h2M757 160h2M766 153h2M579 294h2M756 372h2M455 398h2M820 263h2M583 217h2M887 342h2M320 120h2M183 42h2M63 3h2M124 288h2M166 80h2M994 29h2M887 164h2M198 170h2M389 141h2M610 3h2M702 9h2M714 157h2M214 49h2M345 100h2M8 196h2M1193 378h2M535 397h2M751 43h2M712 381h2M456 196h2M255 62h2M1106 160h2M885 211h2M544 321h2M152 224h2M888 118h2M1249 427h2M58 66h2M1020 126h2M331 8h2M53 395h2M816 35h2M383 98h2M493 268h2M678 301h2M697 94h2M866 200h2M725 78h2M318 84h2M610 259h2M425 268h2M434 200h2M31 247h2M1145 23h2M527 103h2M688 300h2M785 248h2M1024 378h2M942 264h2M948 140h2M853 275h2M269 5h2M182 350h2M546 198h2M72 435h2M65 345h2M921 26h2M687 416h2M662 17h2M1144 62h2M745 174h2M722 279h2M1097 77h2M762 294h2M586 242h2M436 52h2M648 93h2M700 49h2M242 109h2M642 112h2M820 235h2M860 393h2M1150 378h2M464 77h2M738 65h2M129 124h2M156 107h2M842 331h2M494 91h2M382 91h2M355 290h2M797 387h2M1133 277h2M736 282h2M1083 420h2M210 364h2M841 303h2M59 431h2M570 62h2M915 133h2M275 108h2M834 153h2M819 208h2M226 125h2M621 443h2M735 0h2M433 449h2M527 339h2M308 76h2M186 109h2M258 350h2M4 79h2M910 251h2M1090 398h2M608 254h2M335 174h2M269 357h2M77 39h2M229 291h2M250 134h2M135 4h2M913 56h2M1016 88h2M183 79h2M813 164h2M792 28h2M814 82h2M762 275h2M354 391h2M503 290h2M138 156h2M282 116h2M645 283h2M482 303h2M712 116h2M372 243h2M804 298h2M901 320h2M198 114h2M1065 79h2M919 315h2M424 44h2M817 24h2M508 302h2M634 338h2M456 37h2M29 286h2M955 271h2M429 73h2M569 290h2M926 371h2M125 94h2M846 232h2M277 410h2M168 142h2M779 83h2M1196 421h2M53 278h2M717 99h2M752 211h2M428 329h2M1218 103h2M497 147h2M1061 196h2M397 106h2M505 332h2M782 22h2M587 241h2M54 103h2M407 384h2M166 175h2M1220 216h2M630 166h2M790 110h2M985 6h2M938 414h2M531 361h2M303 40h2M667 161h2M461 163h2M1243 128h2M840 236h2M350 160h2M651 386h2M763 189h2M487 305h2M722 280h2M284 77h2M361 247h2M540 259h2M507 315h2M634 293h2M527 301h2M644 301h2M449 303h2M169 357h2M887 287h2M633 390h2M990 316h2M515 279h2M296 405h2M936 265h2M579 410h2M1214 213h2M123 55h2M661 213h2M806 42h2M441 342h2M480 392h2M454 294h2M440 23h2M261 345h2M472 88h2M590 121h2M373 156h2M141 362h2M585 55h2M1166 203h2M447 205h2M710 378h2M318 292h2M333 44h2M768 436h2M311 410h2M469 174h2M909 223h2M304 211h2M1231 347h2M162 221h2M707 159h2M321 124h2M573 356h2M852 291h2M542 39h2M158 86h2M607 441h2M744 150h2M759 238h2M1230 81h2M727 211h2M509 48h2M605 382h2M184 200h2M425 253h2M723 6h2M516 144h2M1179 187h2M453 183h2M357 324h2M901 115h2M617 127h2M650 234h2M422 300h2M544 163h2M1139 423h2M301 184h2M25 84h2M645 0h2M806 445h2M387 246h2M590 193h2M324 64h2M493 427h2M813 40h2M193 210h2M251 75h2M416 231h2M57 114h2M294 203h2M373 386h2M411 129h2M858 87h2M1049 257h2M185 231h2M38 261h2M538 120h2M734 269h2M810 157h2M117 222h2M933 86h2M459 256h2M1115 167h2M851 407h2M302 88h2M676 121h2M225 143h2M767 121h2M34 65h2M784 12h2M320 140h2M759 4h2M466 150h2M41 70h2M531 159h2" stroke="#606762" stroke-width="2" fill="none" transform="translate(0,1)"/>
<path d="M748 298h2M370 52h2M446 393h2M127 97h2M464 240h2M57 128h2M217 286h2M129 226h2M1049 32h2M181 410h2M548 318h2M413 159h2M75 7h2M805 259h2M781 42h2M543 120h2M588 392h2M920 137h2M342 329h2M921 218h2M653 122h2M737 64h2M229 50h2M570 161h2M973 269h2M763 130h2M899 126h2M244 25h2M403 200h2M137 55h2M454 317h2M622 54h2M324 68h2M1071 135h2M393 450h2M710 240h2M348 223h2M316 370h2M217 19h2M721 297h2M621 379h2M395 240h2M1136 60h2M699 242h2M1008 405h2M615 55h2M264 241h2M1206 103h2M399 409h2M282 431h2M560 89h2M1056 36h2M280 277h2M296 223h2M21 346h2M1149 293h2M491 81h2M829 192h2M608 243h2M753 273h2M134 367h2M372 149h2M927 260h2M273 362h2M415 280h2M802 278h2M1235 57h2M986 257h2M480 178h2M548 121h2M331 270h2M704 409h2M888 123h2M434 296h2M687 16h2M31 19h2M659 36h2M751 250h2M19 343h2M1155 232h2M404 145h2M631 255h2M846 34h2M271 77h2M559 311h2M677 271h2M931 97h2M229 206h2M1226 195h2M468 2h2M78 124h2M427 62h2M844 275h2M673 0h2M329 108h2M526 14h2M943 175h2M687 142h2M784 130h2M1136 29h2M392 155h2M634 401h2M1050 298h2M476 220h2M1126 328h2M355 117h2M1157 222h2M534 67h2M182 150h2M895 247h2M692 185h2M807 193h2M438 373h2M424 258h2M475 308h2M443 278h2M668 302h2M287 75h2M404 311h2M741 212h2M688 84h2M512 132h2M475 334h2M687 243h2M686 24h2M1045 207h2M1158 272h2M765 181h2M525 247h2M380 249h2M423 10h2M601 50h2M1044 235h2M233 190h2M455 205h2M1066 11h2M933 424h2M575 138h2M870 94h2M987 144h2M834 108h2M614 222h2M181 8h2M166 417h2M853 225h2M205 219h2M889 238h2M738 132h2M802 200h2M184 126h2M537 121h2M823 450h2M887 187h2M610 400h2M87 374h2M571 190h2M761 154h2M645 254h2M196 151h2M455 169h2M1245 353h2M505 17h2M764 340h2M554 69h2M860 142h2M432 388h2M961 227h2M297 30h2M917 63h2M600 134h2M788 69h2M624 321h2M427 122h2M513 209h2M428 38h2M1011 53h2M456 305h2M550 6h2M10 163h2M351 227h2M473 220h2M413 141h2M220 203h2M273 240h2M232 70h2M192 405h2M610 82h2M805 1h2M949 363h2M756 81h2M695 141h2M501 35h2M574 31h2M698 119h2M566 21h2M116 40h2M771 94h2M597 407h2M742 383h2M382 105h2M802 6h2M508 16h2M846 54h2M1153 90h2M621 255h2M992 118h2M352 31h2M671 141h2M1211 329h2M1126 370h2M780 29h2M499 315h2M833 267h2M423 356h2M620 321h2M605 187h2M669 153h2M43 268h2M750 175h2M430 42h2M977 112h2M236 318h2M490 330h2M572 201h2M633 107h2M644 434h2M379 317h2M308 5h2M797 237h2M26 216h2M741 170h2M492 97h2M434 106h2M46 430h2M986 109h2M775 53h2M661 222h2M529 204h2M562 418h2M192 86h2M720 312h2M478 258h2M374 52h2M736 348h2M719 48h2M284 382h2M625 183h2M798 85h2M639 196h2M336 110h2M439 324h2M787 298h2M587 353h2M738 204h2M621 263h2M950 266h2M754 154h2M583 28h2M428 196h2M1059 227h2M849 120h2M760 109h2M450 70h2M570 324h2M802 392h2M267 42h2M563 215h2M1231 307h2M214 357h2M1222 325h2M287 361h2M404 239h2M150 31h2M767 388h2M307 158h2M507 11h2M501 106h2M582 310h2M172 222h2M486 226h2M980 136h2M710 80h2M401 372h2M774 128h2M794 239h2M512 124h2M1122 434h2M338 349h2M172 225h2M590 432h2M262 306h2M557 255h2M660 299h2M655 17h2M647 145h2M706 230h2M326 308h2M261 141h2M150 357h2M572 148h2M744 322h2M979 380h2M624 212h2M235 19h2M888 330h2M224 38h2M330 372h2M1050 117h2M110 103h2M550 329h2M1052 219h2M1048 434h2M27 130h2M520 243h2M166 16h2M934 116h2M391 211h2M993 352h2M52 40h2M612 411h2M1008 66h2M1099 221h2M91 38h2M656 239h2M354 253h2M669 84h2M424 260h2M641 158h2M83 229h2M260 432h2M502 33h2M621 197h2M537 51h2M209 176h2M376 194h2M478 335h2M862 211h2M345 215h2M978 23h2M542 42h2M1210 143h2M610 133h2M460 353h2M420 34h2M562 91h2M251 308h2M71 394h2M636 126h2M861 32h2M795 242h2M207 232h2M149 134h2M1135 269h2M458 302h2M910 318h2M446 324h2M721 261h2M751 207h2M577 23h2M788 297h2M417 140h2M824 235h2M388 258h2M54 428h2M339 248h2M798 358h2M11 302h2M292 213h2M793 361h2M565 8h2M621 85h2M715 248h2M1142 13h2M685 81h2M239 402h2M1137 196h2M482 375h2M406 236h2M476 142h2M761 445h2M11 120h2M703 61h2M54 154h2M476 224h2M528 284h2M963 352h2M542 298h2M690 265h2M585 334h2M740 295h2M1123 405h2M552 120h2M678 50h2M656 93h2M1123 287h2M205 67h2M349 45h2M374 163h2M939 258h2M485 176h2M227 346h2M61 371h2M462 426h2M540 277h2M956 69h2M541 304h2M1072 22h2M1246 445h2M657 354h2M1113 96h2M441 112h2M795 293h2M221 65h2M1200 280h2M365 406h2M1007 6h2M507 317h2M729 141h2M540 292h2M480 200h2M828 176h2M223 233h2M629 125h2M1206 429h2M454 129h2M553 205h2M587 241h2M365 210h2M774 340h2M179 301h2M1202 43h2M184 181h2M548 179h2M170 377h2M378 344h2M184 359h2M324 435h2M637 17h2M11 374h2M160 12h2M1047 369h2M553 33h2M933 88h2M294 370h2M627 383h2M885 381h2M1110 1h2M597 89h2M1071 31h2M223 306h2M652 296h2M827 414h2M386 317h2M592 98h2M763 354h2M767 216h2M788 167h2M804 410h2M562 361h2M662 115h2M349 279h2M334 91h2M763 247h2M870 113h2M1122 342h2M518 151h2M772 247h2M197 194h2M682 393h2M597 281h2M618 167h2M7 236h2M315 238h2M329 94h2M488 88h2M1149 348h2M759 223h2M851 28h2M664 223h2M101 252h2M906 314h2M1249 14h2M1028 142h2M109 174h2M525 253h2M153 82h2M96 324h2M15 304h2M1046 52h2M591 245h2M734 211h2M848 67h2M825 404h2M562 17h2M764 413h2M984 250h2M270 171h2M271 152h2M188 118h2M116 82h2M33 346h2M899 205h2M815 183h2M1073 129h2M262 262h2M504 75h2M606 196h2M512 17h2M465 36h2M867 425h2M450 18h2M171 109h2M690 306h2M625 240h2M570 220h2M558 139h2M268 168h2M212 75h2M346 133h2M358 119h2M38 144h2M894 79h2M284 282h2M883 260h2M859 125h2M635 224h2M976 234h2M406 399h2M222 361h2M1146 139h2M80 320h2M383 291h2M972 91h2M277 12h2M771 84h2M1092 119h2M597 84h2M675 81h2M340 253h2M230 447h2M597 418h2M573 433h2M125 275h2M675 104h2M570 325h2M601 123h2M215 231h2M439 2h2M94 400h2M1178 143h2M823 12h2M675 17h2M1067 55h2M68 356h2M253 26h2M135 181h2M314 148h2M913 71h2M594 302h2M1078 246h2M1 308h2M683 71h2M404 129h2M845 183h2M563 85h2M1079 168h2M14 343h2M493 192h2M536 105h2M890 120h2M1098 446h2M265 104h2M913 100h2M829 110h2M195 320h2M480 70h2M668 218h2M87 37h2M791 381h2M745 64h2M621 295h2M749 288h2M546 248h2M249 202h2M460 67h2M623 34h2M459 61h2M803 240h2M417 39h2M916 219h2M407 72h2M347 261h2" stroke="#5c5c46" stroke-width="2" fill="none" transform="translate(0,1)"/>
<path d="M492 219h2M37 196h2M554 177h2M265 7h2M92 235h2M1120 165h2M158 307h2M152 297h2M736 67h2M400 365h2M574 52h2M703 144h2M472 238h2M1016 93h2M601 150h2M289 22h2M837 347h2M814 356h2M241 199h2M452 33h2M563 417h2M1028 245h2M407 93h2M671 192h2M606 419h2M895 371h2M534 10h2M377 253h2M51 190h2M662 86h2M487 259h2M606 237h2M728 326h2M547 360h2M575 183h2M429 36h2M1245 400h2M581 222h2M633 287h2M31 425h2M952 362h2M128 119h2M1201 290h2M454 88h2M215 241h2M843 126h2M432 286h2M488 121h2M851 83h2M246 30h2M601 208h2M498 376h2M663 285h2M287 345h2M779 227h2M636 262h2M60 100h2M294 366h2M927 345h2M272 328h2M831 425h2M622 100h2M585 321h2M519 332h2M999 56h2M379 76h2M779 428h2M739 168h2M1170 324h2M829 228h2M345 300h2M569 185h2M458 15h2M667 388h2M547 384h2M311 4h2M489 311h2M251 209h2M768 52h2M181 103h2M751 21h2M822 277h2M381 275h2M177 160h2M860 348h2M560 112h2M1148 368h2M670 194h2M190 102h2M181 103h2M366 56h2M488 59h2M1016 69h2M66 149h2M243 285h2M988 70h2M575 321h2M737 355h2M897 206h2M456 398h2M868 191h2M402 395h2M1040 199h2M158 361h2M207 45h2M183 331h2M148 45h2M127 33h2M772 428h2M534 123h2M456 440h2M394 223h2M1168 195h2M484 210h2M261 113h2M329 201h2M129 319h2M393 94h2M634 203h2M938 282h2M693 410h2M474 294h2M669 116h2M652 176h2M879 47h2M62 217h2M730 316h2M889 166h2M169 293h2M199 18h2M439 33h2M245 330h2M737 96h2M485 342h2M500 351h2M206 101h2M491 27h2M379 22h2M838 16h2M375 364h2M1042 61h2M900 261h2M227 68h2M419 225h2M646 223h2M1101 222h2M523 129h2M1002 93h2M587 22h2M250 60h2M415 78h2M209 409h2M1237 265h2M630 191h2M78 170h2M1235 315h2M12 156h2M438 223h2M189 194h2M1182 75h2M632 144h2M674 68h2M429 124h2M1059 200h2M309 447h2M1055 136h2M680 88h2M281 90h2M887 95h2M187 108h2M1172 22h2M698 232h2M912 206h2M532 162h2M881 20h2M698 11h2M347 241h2M1000 444h2M519 273h2M365 366h2M655 9h2M157 46h2M663 75h2M845 361h2M217 172h2M614 172h2M211 59h2M1008 276h2M740 284h2M299 273h2M900 280h2M764 159h2M741 44h2M149 261h2M817 10h2M21 56h2M1008 431h2M62 292h2M388 46h2M492 276h2M255 119h2M918 252h2M441 103h2M437 321h2M553 200h2M350 257h2M604 11h2M794 92h2M214 143h2M501 185h2M1022 403h2M379 1h2M655 342h2M1235 166h2M228 84h2M564 208h2M758 132h2M672 268h2M674 243h2M306 53h2M362 219h2M273 10h2M1193 323h2M770 22h2M521 336h2M714 206h2M298 218h2M212 108h2M582 251h2M2 57h2M760 140h2M1133 20h2M594 319h2M462 110h2M297 81h2M10 204h2M1090 309h2M161 441h2M661 64h2M959 369h2M688 380h2M474 430h2M352 68h2M383 129h2M524 10h2M682 108h2M581 400h2M617 244h2M539 129h2M1005 93h2M554 139h2M292 85h2M679 144h2M102 59h2M972 2h2M741 188h2M171 101h2M560 407h2M562 363h2M222 393h2M927 288h2M770 430h2M379 216h2M240 277h2M1216 190h2M341 248h2M1181 219h2M792 130h2M1112 443h2M491 174h2M1075 252h2M565 59h2M76 171h2M991 116h2M464 190h2M1214 188h2M35 314h2M382 273h2M563 364h2M1029 154h2M502 54h2M286 88h2M511 238h2M963 67h2M398 386h2M324 305h2M414 400h2M322 17h2M640 204h2M16 409h2M876 406h2M652 62h2M124 242h2M780 79h2M245 93h2M549 146h2M752 390h2M872 218h2M87 416h2M672 208h2M569 290h2M685 61h2M432 111h2M752 356h2M652 106h2M726 1h2M590 293h2M370 254h2M258 81h2M1104 302h2M974 254h2M623 185h2M686 124h2M963 437h2M114 331h2M913 213h2M877 240h2M528 219h2M404 85h2M480 85h2M600 46h2M982 133h2M395 252h2M745 151h2M326 195h2M206 93h2M836 157h2M613 266h2M733 133h2M636 359h2M739 319h2M981 247h2M309 257h2M733 185h2M622 271h2M626 221h2M695 314h2M254 343h2M387 56h2M615 222h2M1013 285h2M654 279h2M841 197h2M919 275h2M955 118h2M1237 146h2M357 85h2M213 264h2M217 215h2M730 252h2M954 85h2M571 170h2M10 5h2M441 353h2M472 213h2M613 259h2M840 136h2M656 450h2M779 47h2M243 268h2M497 69h2M737 159h2M9 86h2M639 196h2M950 351h2M406 112h2M766 274h2M572 317h2M941 344h2M839 13h2M299 296h2M436 251h2M904 422h2M338 109h2M441 141h2M798 397h2M905 185h2M591 318h2M688 324h2M494 199h2M575 205h2M889 81h2M405 328h2M1054 61h2M941 158h2M578 396h2M1107 95h2M838 158h2M318 316h2M363 13h2M763 81h2M781 85h2M883 98h2M543 108h2M646 447h2M873 171h2M56 1h2M201 285h2M477 103h2M686 164h2M239 161h2M362 294h2M49 65h2M877 101h2M192 145h2M1068 112h2M200 115h2M477 67h2M366 54h2M282 95h2M586 380h2M807 19h2M613 279h2M455 350h2M1199 220h2M596 223h2M709 32h2M135 300h2M120 297h2M240 281h2M425 406h2M981 355h2M345 84h2M758 17h2M1107 351h2M166 106h2M601 277h2M405 105h2M516 141h2M358 162h2M658 8h2M1246 145h2M436 71h2M330 126h2M923 141h2M1029 66h2M282 90h2M45 323h2M640 71h2M10 330h2M334 173h2M739 57h2M1029 432h2M1193 246h2M685 328h2M955 10h2M718 108h2M894 47h2M624 38h2M248 250h2M735 327h2M628 257h2M299 41h2M786 171h2M202 214h2M729 33h2M129 335h2M45 376h2M660 48h2M538 315h2M274 346h2M775 129h2M480 78h2M671 62h2M377 230h2M580 7h2M681 133h2M995 139h2M6 131h2M154 266h2M804 307h2M420 241h2M1125 67h2M242 162h2M1185 193h2M450 325h2M176 255h2M654 293h2M924 203h2M609 340h2M505 322h2M182 231h2M820 330h2M390 8h2M646 139h2M438 210h2M421 107h2M616 80h2M315 226h2M1155 269h2M617 119h2M77 367h2M392 145h2M414 226h2M1036 52h2M866 64h2M181 315h2M296 167h2M560 131h2M417 172h2M706 136h2M367 251h2M1185 64h2M568 289h2M670 366h2M596 18h2M1002 223h2M414 4h2M1166 241h2M411 108h2M196 362h2M640 30h2M1111 87h2M430 124h2M693 237h2M1196 272h2M783 65h2M702 40h2M147 144h2M724 300h2M297 119h2M370 32h2M680 426h2M1146 211h2M466 173h2M814 292h2M590 93h2M765 164h2M124 414h2M595 287h2M632 315h2M305 39h2M770 306h2M392 75h2M190 277h2M997 190h2M534 279h2M283 305h2M504 338h2M986 161h2M800 125h2M634 204h2M493 346h2M90 54h2M1059 283h2M555 375h2M104 353h2M730 308h2M77 39h2M888 123h2M700 259h2M40 292h2" stroke="#485d63" stroke-width="2" fill="none" transform="translate(0,1)"/>
<path d="M241 262h2M582 366h2M770 76h2M175 73h2M1057 11h2M728 395h2M464 102h2M967 132h2M1249 430h2M858 427h2M250 397h2M694 215h2M188 369h2M913 1h2M446 182h2M618 372h2M770 161h2M893 261h2M758 116h2M377 201h2M775 429h2M1149 388h2M526 99h2M309 310h2M132 332h2M473 430h2M716 111h2M416 417h2M639 381h2M848 213h2M83 325h2M45 27h2M415 81h2M138 377h2M1149 402h2M788 29h2M478 95h2M857 346h2M259 173h2M996 311h2M941 276h2M593 185h2M343 133h2M295 327h2M508 95h2M665 264h2M453 332h2M1199 202h2M862 249h2M127 332h2M270 141h2M521 222h2M500 348h2M452 143h2M889 250h2M776 94h2M655 117h2M981 97h2M400 240h2M117 207h2M412 288h2M344 187h2M490 190h2M723 51h2M550 227h2M678 295h2M289 348h2M684 30h2M631 129h2M163 299h2M661 14h2M648 288h2M732 416h2M402 260h2M929 278h2M68 366h2M453 72h2M627 367h2M762 32h2M269 26h2M601 388h2M614 25h2M920 246h2M270 212h2M748 402h2M467 334h2M518 341h2M699 204h2M335 289h2M421 3h2M517 403h2M642 217h2M582 385h2M463 54h2M448 390h2M242 97h2M909 240h2M650 50h2M746 74h2M659 16h2M274 382h2M778 339h2M680 295h2M502 236h2M614 336h2M641 88h2M749 154h2M628 129h2M273 122h2M465 106h2M1236 410h2M853 103h2M189 396h2M1024 86h2M785 35h2M716 281h2M1103 6h2M525 41h2M568 233h2M287 255h2M788 295h2M582 233h2M553 263h2M788 82h2M405 35h2M746 171h2M712 87h2M627 232h2M558 280h2M874 217h2M776 400h2M477 241h2M840 259h2M451 449h2M561 145h2M693 82h2M119 14h2M1255 394h2M693 308h2M458 48h2M731 205h2M606 11h2M139 153h2M697 117h2M548 403h2M316 276h2M817 82h2M920 236h2M1238 277h2M326 226h2M710 401h2M872 168h2M109 416h2M740 34h2M611 106h2M281 108h2M770 64h2M692 402h2M690 76h2M430 225h2M862 34h2M249 300h2M513 90h2M509 149h2M1132 89h2M1188 239h2M821 20h2M10 386h2M1228 285h2M292 104h2M1089 239h2M810 438h2M463 89h2M475 158h2M861 202h2M328 3h2M532 351h2M276 212h2M157 240h2M979 256h2M576 76h2M580 192h2M456 130h2M796 217h2M1008 38h2M575 342h2M597 114h2M903 378h2M50 438h2M587 315h2M734 57h2M1208 115h2M1010 394h2M423 32h2M85 340h2M329 5h2M1079 80h2M761 271h2M175 297h2M545 383h2M634 336h2M966 23h2M530 210h2M760 274h2M234 153h2M58 17h2M714 110h2M467 302h2M862 170h2M469 406h2M1015 36h2M892 98h2M361 70h2M38 121h2M692 176h2M542 230h2M700 292h2M649 14h2M554 289h2M194 205h2M378 24h2M537 308h2M279 438h2M335 59h2M93 376h2M813 388h2M290 39h2M242 6h2M855 377h2M1206 362h2M1033 93h2M645 102h2M982 136h2M431 213h2M537 21h2M907 171h2M622 222h2M169 273h2M504 164h2M916 260h2M292 8h2M375 289h2M412 367h2M811 302h2M584 296h2M437 200h2M608 146h2M298 289h2M787 36h2M444 181h2M261 186h2M570 23h2M38 141h2M216 243h2M748 217h2M773 134h2M123 428h2M595 146h2M1236 87h2M743 12h2M440 218h2M1026 157h2M632 271h2M290 101h2M586 247h2M614 92h2M401 357h2M1135 81h2M78 91h2M613 247h2M658 433h2M417 83h2M149 220h2M659 153h2M1070 5h2M704 361h2M696 285h2M228 62h2M621 20h2M539 256h2M682 72h2M519 105h2M410 98h2M232 59h2M1221 310h2M805 78h2M682 153h2M413 144h2M712 241h2M399 62h2M246 385h2M1083 79h2M458 121h2M418 288h2M689 261h2M67 24h2M713 32h2M773 101h2M1107 35h2M448 174h2M1246 376h2M428 165h2M710 368h2M680 195h2M611 369h2M1223 435h2M1000 373h2M476 342h2M359 152h2M1071 358h2M648 53h2M214 228h2M383 35h2M368 381h2M490 172h2M908 74h2M133 235h2M849 22h2M113 116h2M404 182h2M586 211h2M671 217h2M719 329h2M669 397h2M94 59h2M752 49h2M458 168h2M863 208h2M489 29h2M594 25h2M159 398h2M605 156h2M290 242h2M367 26h2M670 102h2M435 202h2M676 408h2M913 331h2M903 100h2M316 220h2M449 17h2M488 99h2M153 200h2M769 179h2M785 202h2M375 172h2M325 133h2M871 347h2M355 94h2M560 213h2M534 31h2M946 86h2M99 406h2M43 207h2M618 326h2M393 318h2M642 284h2M474 26h2M460 132h2M334 163h2M628 268h2M612 317h2M1057 184h2M1081 129h2M1108 292h2M179 99h2M409 396h2M638 176h2M198 79h2M968 203h2M399 149h2M401 297h2M583 283h2M535 44h2M149 17h2M1078 178h2M723 152h2M334 30h2M375 108h2M75 305h2M687 199h2M479 165h2M330 21h2M374 247h2M586 254h2M157 192h2M85 334h2M701 377h2M185 80h2M984 445h2M346 416h2M1245 219h2M352 78h2M953 224h2M193 11h2M537 320h2M517 157h2M218 119h2M444 167h2M780 280h2M610 389h2M925 201h2M515 101h2M581 6h2M295 89h2M1062 14h2M582 312h2M286 185h2M718 21h2M844 317h2M722 191h2M638 277h2M582 416h2M1189 37h2M1250 256h2M752 293h2M931 126h2M696 148h2M457 298h2M143 78h2M967 329h2M1216 413h2M1212 443h2M274 372h2M604 167h2M997 13h2M673 403h2M597 251h2M683 418h2M643 150h2M998 414h2M455 272h2M47 312h2M187 304h2M1134 103h2M681 62h2M194 188h2M634 166h2M948 326h2M587 322h2M323 19h2M607 217h2M496 267h2M1227 342h2M1043 54h2M574 390h2M627 360h2M1177 162h2M943 288h2M989 157h2M615 144h2M610 135h2M872 163h2M275 9h2M1066 160h2M519 178h2M608 111h2M560 268h2M371 229h2M760 438h2M1149 114h2M340 193h2M659 393h2M205 368h2M239 245h2M643 319h2M634 384h2M1205 1h2M781 195h2M391 427h2M802 29h2M653 76h2M134 441h2M1227 55h2M551 85h2M132 362h2M935 340h2M1217 19h2M78 380h2M398 173h2M107 132h2M48 208h2M212 226h2M249 275h2M398 104h2M878 97h2M953 33h2M610 113h2M247 211h2M681 35h2M1215 123h2M835 126h2M453 182h2M243 83h2M426 316h2M439 125h2M746 222h2M331 27h2M880 306h2M602 406h2M218 241h2M413 7h2M495 137h2M545 46h2M368 46h2M684 277h2M697 317h2M336 237h2M146 448h2M482 238h2M626 1h2M477 349h2M382 382h2M566 275h2M754 224h2M432 242h2M325 173h2M461 94h2M71 332h2M621 16h2M1026 27h2M228 150h2M480 137h2M774 70h2M1117 363h2M1201 92h2M100 257h2M482 360h2M1195 112h2M1073 332h2M708 366h2M898 20h2M918 401h2M643 302h2M511 244h2M811 312h2M1131 6h2M949 119h2M601 129h2M573 365h2M766 447h2M536 351h2M143 73h2M474 297h2M825 120h2M97 358h2M417 288h2M409 76h2M1125 217h2M740 288h2M285 105h2M425 238h2M594 303h2M452 58h2M309 78h2M425 222h2M989 146h2M544 335h2M597 287h2M507 281h2M1020 322h2M928 151h2M170 171h2M1050 385h2M542 210h2M710 111h2M353 166h2M673 207h2M255 39h2M845 17h2M142 289h2M1065 281h2M746 295h2M457 322h2M133 201h2M1150 285h2M163 70h2M951 245h2M539 64h2M331 142h2M107 339h2M349 372h2M590 282h2" stroke="#505050" stroke-width="2" fill="none" transform="translate(0,1)"/>
<path d="M143 123h2M1016 41h2M538 144h2M807 53h2M399 412h2M414 430h2M330 361h2M371 138h2M929 5h2M882 83h2M541 418h2M518 190h2M1126 65h2M787 204h2M1202 250h2M622 65h2M860 41h2M802 385h2M105 282h2M988 161h2M860 157h2M219 34h2M1047 40h2M595 315h2M403 72h2M539 364h2M1093 340h2M419 150h2M728 48h2M876 279h2M337 336h2M218 143h2M950 17h2M496 436h2M371 328h2M988 233h2M299 180h2M607 430h2M295 17h2M599 181h2M831 279h2M80 422h2M914 34h2M434 77h2M504 192h2M479 158h2M1200 384h2M798 63h2M899 445h2M1078 146h2M572 56h2M461 71h2M496 170h2M712 225h2M599 180h2M496 166h2M614 274h2M202 209h2M179 88h2M956 145h2M590 64h2M761 284h2M72 38h2M195 446h2M502 179h2M685 397h2M199 384h2M184 212h2M550 204h2M784 77h2M775 181h2M88 164h2M927 339h2M759 267h2M761 22h2M508 443h2M643 4h2M742 85h2M741 156h2M834 332h2M638 27h2M156 140h2M780 449h2M183 299h2M1048 165h2M508 407h2M991 381h2M283 215h2M231 18h2M1069 178h2M493 384h2M217 337h2M895 266h2M647 83h2M346 122h2M442 139h2M407 116h2M870 171h2M725 260h2M297 320h2M976 59h2M533 8h2M589 420h2M291 254h2M1187 314h2M640 349h2M3 136h2M7 359h2M455 19h2M270 46h2M533 367h2M424 422h2M498 170h2M958 6h2M186 94h2M650 113h2M945 114h2M641 387h2M974 140h2M163 350h2M367 315h2M997 227h2M658 245h2M487 62h2M377 243h2M585 206h2M993 281h2M695 156h2M661 19h2M622 23h2M506 179h2M206 126h2M150 385h2M812 174h2M875 131h2M803 337h2M453 158h2M847 338h2M997 166h2M653 6h2M302 49h2M700 61h2M518 140h2M550 301h2M1172 27h2M479 398h2M716 294h2M1037 351h2M311 448h2M644 28h2M304 4h2M960 39h2M445 422h2M4 191h2M899 175h2M758 436h2M507 228h2M801 440h2M794 293h2M532 207h2M423 123h2M755 115h2M381 78h2M670 353h2M371 310h2M218 147h2M801 15h2M291 393h2M454 235h2M323 151h2M831 221h2M582 95h2M974 42h2M1081 142h2M663 293h2M307 16h2M261 131h2M655 355h2M898 179h2M975 252h2M601 135h2M847 106h2M297 90h2M894 153h2M127 46h2M1125 223h2M654 137h2M809 66h2M430 192h2M363 122h2M613 391h2M319 353h2M706 176h2M877 10h2M325 198h2M683 372h2M401 101h2M277 55h2M222 303h2M525 239h2M1167 24h2M62 116h2M449 418h2M456 422h2M607 310h2M610 327h2M61 5h2M793 402h2M685 68h2M385 208h2M882 313h2M750 391h2M394 26h2M545 210h2M257 15h2M596 165h2M1234 246h2M715 190h2M504 304h2M1129 15h2M753 42h2M568 152h2M243 386h2M348 241h2M679 141h2M177 206h2M367 159h2M658 198h2M636 123h2M453 43h2M675 173h2M587 351h2M471 0h2M517 204h2M891 369h2M531 340h2M750 369h2M438 115h2M882 114h2M884 179h2M176 120h2M213 112h2M477 339h2M624 149h2M849 250h2M247 210h2M10 178h2M698 157h2M540 336h2M959 67h2M621 15h2M619 211h2M627 408h2M557 217h2M574 114h2M618 226h2M704 112h2M620 118h2M352 341h2M879 74h2M601 213h2M187 299h2M424 242h2M673 280h2M328 108h2M771 298h2M469 268h2M636 373h2M476 221h2M17 414h2M1059 38h2M1073 132h2M1223 179h2M871 291h2M1095 240h2M866 322h2M393 346h2M1000 340h2M554 239h2M821 16h2M1029 203h2M491 76h2M127 301h2M918 248h2M414 156h2M1227 72h2M97 292h2M1171 120h2M521 120h2M630 30h2M486 299h2M384 58h2M638 268h2M554 96h2M228 32h2M952 185h2M1215 133h2M1141 158h2M829 374h2M831 214h2M317 180h2M67 176h2M349 78h2M151 393h2M467 385h2M453 196h2M708 308h2M189 103h2M678 351h2M1044 129h2M1103 220h2M790 391h2M629 294h2M509 402h2M786 105h2M761 122h2M127 214h2M506 114h2M640 269h2M617 343h2M700 137h2M566 198h2M344 415h2M134 25h2M454 259h2M732 255h2M779 21h2M666 26h2M452 243h2M93 274h2M713 417h2M867 228h2M916 239h2M221 353h2M265 258h2M839 17h2M270 170h2M687 31h2M74 66h2M725 142h2M375 265h2M375 4h2M1203 339h2M183 254h2M101 353h2M500 416h2M632 311h2M627 279h2M385 404h2M669 248h2M809 341h2M374 116h2M834 391h2M338 84h2M615 117h2M37 305h2M962 220h2M267 441h2M729 215h2M669 11h2M723 132h2M923 326h2M479 187h2M620 135h2M444 79h2M577 115h2M908 255h2M88 283h2M1243 27h2M62 55h2M349 103h2M648 369h2M492 332h2M447 312h2M872 26h2M994 58h2M32 107h2M1178 435h2M159 296h2M871 317h2M533 98h2M371 294h2M528 47h2M396 271h2M645 400h2M326 271h2M620 140h2M398 171h2M988 188h2M541 343h2M555 195h2M497 420h2M678 249h2M174 392h2M743 403h2M693 59h2M512 189h2M628 245h2M972 105h2M436 94h2M748 384h2M929 38h2M170 57h2M379 221h2M484 335h2M1224 129h2M550 358h2M595 104h2M624 151h2M228 143h2M1215 231h2M312 104h2M1134 55h2M453 399h2M171 319h2M181 412h2M195 203h2M1033 133h2M1027 337h2M508 248h2M743 351h2M1234 398h2M631 43h2M502 126h2M104 403h2M811 342h2M531 176h2M222 68h2M575 144h2M543 266h2M559 63h2M1203 342h2M472 177h2M318 383h2M415 301h2M440 40h2M823 203h2M373 325h2M390 194h2M86 81h2M97 404h2M1046 251h2M723 289h2M979 365h2M1241 103h2M203 420h2M981 439h2M588 166h2M993 257h2M340 74h2M158 209h2M432 11h2M472 311h2M1019 281h2M698 13h2M381 373h2M380 394h2M1224 377h2M1003 183h2M733 251h2M1082 60h2M103 248h2M698 357h2M456 235h2M667 239h2M806 288h2M734 254h2M718 52h2M456 27h2M366 228h2M1026 149h2M5 268h2M899 308h2M411 58h2M438 372h2M414 299h2M673 7h2M645 143h2M936 139h2M535 160h2M936 135h2M632 155h2M263 156h2M537 247h2M759 421h2M279 260h2M44 355h2M791 251h2M491 15h2M518 107h2M627 71h2M233 143h2M763 14h2M546 185h2M493 341h2M634 178h2M466 310h2M636 238h2M557 356h2M923 19h2M685 72h2M1077 166h2M519 342h2M1074 5h2M671 141h2M553 430h2M821 222h2M220 152h2M855 136h2M573 151h2M618 255h2M868 54h2M841 414h2M669 250h2M868 78h2M558 193h2M339 194h2M471 17h2M336 298h2M129 108h2M1131 29h2M848 388h2M1214 391h2M784 368h2M676 182h2M1158 231h2M559 316h2M569 214h2M204 354h2M534 331h2M706 308h2M469 164h2M885 42h2M776 123h2M516 233h2M1030 314h2M569 97h2M482 174h2M568 38h2M743 61h2M604 309h2M323 261h2M827 443h2M561 407h2M761 395h2M359 19h2M664 326h2M1202 323h2M797 88h2M1007 244h2M566 83h2M513 253h2M433 189h2M743 31h2M625 424h2M537 156h2M606 48h2M688 114h2M85 28h2M181 89h2M556 446h2M708 41h2M1165 205h2M548 55h2M310 133h2M24 427h2M113 307h2M289 48h2M680 13h2M833 222h2M592 79h2M508 204h2M65 144h2M229 311h2M998 412h2M664 37h2M869 123h2M656 330h2M675 18h2M713 390h2M744 338h2M1092 249h2M485 351h2M442 436h2M244 326h2M813 296h2M390 136h2M499 251h2M396 284h2M1170 419h2M368 248h2M647 200h2M631 210h2M385 60h2M919 1h2M491 69h2M413 397h2M459 378h2M751 49h2M613 120h2M552 407h2M526 175h2M746 253h2M235 337h2M355 11h2M699 182h2M152 430h2M755 267h2M431 413h2M652 18h2" stroke="#575a54" stroke-width="2" fill="none" transform="translate(0,1)"/>
<path d="M643 238h2M499 41h2M642 174h2M1072 261h2M567 21h2M567 231h2M529 207h2M1053 243h2M738 53h2M203 354h2M595 362h2M175 242h2M230 360h2M831 335h2M44 65h2M21 275h2M629 28h2M674 97h2M400 190h2M395 165h2M828 20h2M49 422h2M426 49h2M354 119h2M950 18h2M159 104h2M797 337h2M366 11h2M952 120h2M224 99h2M418 187h2M717 304h2M1186 118h2M409 265h2M757 267h2M435 20h2M1123 52h2M600 321h2M305 126h2M766 443h2M192 17h2M528 402h2M686 144h2M184 7h2M399 133h2M366 23h2M943 280h2M659 3h2M21 13h2M59 51h2M644 3h2M621 214h2M578 182h2M719 211h2M495 3h2M917 57h2M1141 36h2M336 193h2M386 113h2M737 271h2M835 347h2M521 181h2M432 86h2M643 3h2M683 116h2M270 129h2M578 45h2M511 82h2M738 23h2M932 295h2M594 228h2M523 123h2M777 201h2M360 33h2M1169 418h2M410 363h2M273 21h2M1073 269h2M712 9h2M679 2h2M1097 277h2M475 122h2M857 210h2M568 165h2M740 201h2M546 57h2M90 77h2M915 140h2M662 173h2M409 225h2M966 310h2M847 134h2M633 390h2M332 226h2M131 275h2M291 285h2M538 92h2M237 56h2M191 207h2M207 42h2M372 358h2M477 33h2M861 330h2M895 161h2M469 159h2M1192 110h2M452 262h2M644 316h2M265 383h2M774 158h2M1146 109h2M1033 151h2M1172 280h2M661 412h2M784 272h2M434 50h2M1153 188h2M867 386h2M204 195h2M518 99h2M969 64h2M626 302h2M694 434h2M622 137h2M901 449h2M346 51h2M529 119h2M822 345h2M594 281h2M586 116h2M945 261h2M1182 430h2M1200 275h2M458 159h2M18 6h2M768 186h2M1176 223h2M318 290h2M561 220h2M261 107h2M357 228h2M1033 306h2M759 9h2M243 230h2M1054 65h2M437 218h2M761 295h2M484 255h2M512 44h2M536 287h2M175 140h2M89 310h2M748 58h2M179 270h2M475 348h2M659 119h2M1191 30h2M485 123h2M220 117h2M133 36h2M369 381h2M689 211h2M936 88h2M268 432h2M477 41h2M443 84h2M631 152h2M631 191h2M455 248h2M337 122h2M141 117h2M923 85h2M643 273h2M457 197h2M576 16h2M176 319h2M1024 22h2M735 3h2M625 54h2M599 436h2M1106 256h2M533 257h2M65 261h2M361 6h2M919 212h2M357 340h2M1034 241h2M1046 431h2M999 105h2M913 37h2M606 223h2M125 39h2M466 65h2M667 233h2M444 264h2M49 101h2M264 333h2M1003 16h2M793 231h2M355 244h2M1154 183h2M1124 108h2M192 146h2M516 99h2M466 269h2M756 83h2M585 201h2M596 105h2M1015 422h2M1019 190h2M407 366h2M596 22h2M928 299h2M240 305h2M147 43h2M626 317h2M264 187h2M931 365h2M649 215h2M622 82h2M20 144h2M527 277h2M97 250h2M383 344h2M467 209h2M296 135h2M600 81h2M394 75h2M666 362h2M743 262h2M1088 124h2M708 117h2M684 215h2M186 3h2M3 275h2M590 10h2M334 416h2M1154 205h2M1173 58h2M746 17h2M467 20h2M577 232h2M850 78h2M214 310h2M455 115h2M672 195h2M571 204h2M179 63h2M565 70h2M194 304h2M374 149h2M743 87h2M1208 353h2M297 111h2M985 164h2M666 46h2M791 21h2M1139 213h2M545 24h2M7 139h2M651 260h2M556 225h2M408 46h2M484 17h2M589 349h2M1231 284h2M341 51h2M39 314h2M743 316h2M744 194h2M351 78h2M128 332h2M820 270h2M427 295h2M646 63h2M1092 120h2M757 254h2M59 98h2M1029 58h2M716 66h2M463 118h2M549 225h2M1081 385h2M611 261h2M397 353h2M1128 150h2M965 365h2M618 331h2M548 26h2M928 381h2M156 421h2M490 11h2M778 85h2M118 154h2M319 248h2M405 84h2M324 331h2M774 418h2M399 273h2M870 434h2M237 51h2M415 8h2M324 363h2M95 64h2M597 340h2M118 360h2M460 297h2M921 13h2M418 315h2M610 185h2M1230 273h2M285 318h2M921 163h2M670 358h2M437 58h2M189 226h2M424 212h2M858 16h2M180 159h2M437 151h2M247 229h2M622 370h2M186 420h2M1044 275h2M255 171h2M534 196h2M276 342h2M496 434h2M498 200h2M545 52h2M886 164h2M11 217h2M176 437h2M362 350h2M676 377h2M664 58h2M108 334h2M838 208h2M264 87h2M1044 134h2M172 48h2M760 77h2M580 157h2M634 337h2M777 143h2M454 119h2M173 43h2M714 225h2M371 131h2M533 65h2M93 187h2M802 253h2M880 20h2M660 139h2M243 65h2M811 261h2M1240 82h2M1140 185h2M263 253h2M403 391h2M309 21h2M595 226h2M151 209h2M250 179h2M1162 374h2M110 242h2M544 310h2M448 64h2M928 80h2M285 395h2M866 426h2M221 424h2M819 302h2M451 59h2M387 450h2M941 234h2M995 403h2M818 64h2M794 212h2M464 89h2M1109 165h2M491 269h2M698 231h2M646 205h2M758 249h2M152 438h2M655 351h2M548 146h2M349 128h2M630 32h2M469 268h2M491 336h2M9 167h2M449 240h2M332 29h2M873 75h2M444 193h2M514 51h2M279 190h2M1141 127h2M624 430h2M485 29h2M667 256h2M336 233h2M568 374h2M375 224h2M179 281h2M648 131h2M388 139h2M597 397h2M691 69h2M135 312h2M1126 120h2M739 285h2M984 152h2M909 396h2M26 391h2M218 366h2M1129 345h2M947 169h2M144 309h2M303 265h2M62 95h2M78 184h2M61 141h2M581 307h2M987 98h2M360 59h2M1225 11h2M50 212h2M642 86h2M918 162h2M623 14h2M147 244h2M275 53h2M639 214h2M1166 286h2M893 247h2M730 73h2M506 176h2M994 103h2M1072 125h2M839 153h2M673 416h2M152 172h2M975 124h2M5 33h2M371 223h2M935 16h2M313 30h2M776 349h2M651 118h2M687 156h2M930 397h2M1094 224h2M273 74h2M607 253h2M915 105h2M787 118h2M194 345h2M893 162h2M1082 419h2M1111 77h2M659 370h2M613 142h2M748 47h2M938 153h2M815 355h2M330 222h2M149 70h2M434 222h2M576 294h2M635 233h2M770 199h2M618 99h2M802 383h2M1184 38h2M631 24h2M773 421h2M794 240h2M804 54h2M115 242h2M697 128h2M364 279h2M314 33h2M232 77h2M266 161h2M582 221h2M671 208h2M243 40h2M590 262h2M457 397h2M178 125h2M289 362h2M479 199h2M485 249h2M383 197h2M873 349h2M976 150h2M44 229h2M236 272h2M1045 60h2M575 124h2M664 321h2M801 34h2M517 81h2M807 278h2M694 183h2M668 373h2M564 253h2M726 29h2M111 144h2M855 170h2M433 2h2M805 252h2M125 36h2M23 400h2M449 301h2M505 8h2M783 141h2M346 401h2M44 195h2M442 193h2M378 360h2M417 240h2M760 74h2M1149 145h2M1132 372h2M62 148h2M686 282h2M548 167h2M695 226h2M1105 193h2M971 56h2M603 223h2M271 111h2M936 121h2M451 312h2M330 60h2M446 224h2M596 113h2M677 15h2M739 298h2M731 264h2M923 108h2M168 359h2M460 116h2M514 73h2M1 364h2M831 270h2M642 186h2M575 200h2M191 302h2M839 294h2M931 344h2M456 63h2M1189 416h2M1075 232h2M880 261h2M572 159h2M1009 237h2M225 270h2M1182 300h2M918 85h2M621 120h2M402 56h2M332 329h2M768 36h2M1096 401h2M803 224h2M505 231h2M96 332h2M133 104h2M245 199h2M112 46h2M1036 271h2M726 377h2M891 82h2M422 130h2M402 265h2M501 289h2M1143 417h2M600 427h2M56 270h2M808 251h2M900 80h2M135 16h2M888 54h2M337 231h2M614 60h2M108 27h2M794 438h2M79 215h2M279 304h2M1089 20h2M1092 351h2M537 260h2M83 343h2M705 53h2M430 255h2M487 148h2M626 135h2M563 339h2M528 12h2M543 231h2M272 15h2M637 232h2M721 306h2" stroke="#4f534f" stroke-width="2" fill="none" transform="translate(0,1)"/>
<path d="M990.2 274.2L1259.0 318.8M972.9 276.9L1259.0 326.6M954.8 279.7L1259.0 335.0M936.0 282.6L1259.0 344.3M916.2 285.6L1259.0 354.6M895.5 288.8L1259.0 366.1M873.9 292.2L1259.0 378.8M851.2 295.7L1259.0 393.2M827.3 299.4L1259.0 409.6M802.2 303.3L1259.0 428.3M775.7 307.4L1259.0 449.8M747.8 311.7L1193.2 454.0M718.4 316.2L1113.3 454.0M687.2 321.0L1033.3 454.0M654.2 326.1L953.4 454.0M619.2 331.5L873.5 454.0M581.9 337.3L793.6 454.0M542.2 343.4L713.8 454.0M499.8 350.0L633.9 454.0M454.5 357.0L554.0 454.0M405.8 364.5L474.2 454.0M353.6 372.6L394.3 454.0M297.2 381.3L314.5 454.0M236.2 390.7L234.7 454.0M170.1 400.9L154.9 454.0M98.1 412.0L75.1 454.0M19.5 424.2L-2.0 450.6M990.2 274.2L-2.0 427.5M999.4 275.7L-2.0 434.2M1008.8 277.3L-2.0 441.2M1018.5 278.9L-2.0 448.5M1028.4 280.6L11.0 454.0M1038.6 282.3L57.2 454.0M1049.1 284.0L103.3 454.0M1059.8 285.8L149.4 454.0M1070.8 287.6L195.6 454.0M1082.1 289.5L241.7 454.0M1093.8 291.4L287.9 454.0M1105.7 293.4L334.0 454.0M1118.0 295.4L380.2 454.0M1130.7 297.5L426.3 454.0M1143.7 299.7L472.5 454.0M1157.1 301.9L518.6 454.0M1170.9 304.2L564.8 454.0M1185.2 306.6L611.0 454.0M1199.8 309.0L657.1 454.0M1215.0 311.5L703.3 454.0M1230.6 314.1L749.5 454.0M1246.8 316.8L795.7 454.0M1259.0 321.0L841.9 454.0M1259.0 329.7L888.0 454.0M1259.0 339.4L934.2 454.0M1259.0 350.1L980.4 454.0M1259.0 362.1L1026.6 454.0M1259.0 375.7L1072.8 454.0M1259.0 391.1L1119.0 454.0M1259.0 408.8L1165.2 454.0M1259.0 429.3L1211.4 454.0M1259.0 453.2L1257.7 454.0" stroke="#ececec" stroke-width="1" fill="none"/>
<g transform="translate(-25,-206)"><polygon points="667.0,412.4 723.4,420.3 722.9,505.6 667.0,487.8" fill="#cc00cc" /><polygon points="723.4,433.7 810.2,429.6 865.3,426.8 909.3,424.1 947.9,414.4 975.4,408.9 1013.6,401.7 1022.3,401.9 1030.0,410.8 1035.3,416.0 1040.8,424.5 1037.5,430.3 1033.0,435.5 1022.3,438.8 1011.9,442.0 1008.9,447.2 975.4,447.5 936.9,446.9 903.8,447.5 876.3,452.2 837.7,459.9 782.6,469.5 723.4,480.5" fill="#66ff00" /><path d="M905.0 425.3L1023.1 403.1M905.0 426.0L1027.0 404.2M905.0 427.3L1030.2 407.4M905.0 427.9L1031.8 408.9M905.0 428.6L1028.4 411.2M905.0 429.2L1029.5 412.8M905.0 430.5L1034.6 415.4M905.0 431.1L1035.8 417.0M905.0 431.8L1043.5 418.0M905.0 432.4L1040.4 420.1M905.0 433.7L1043.0 423.5M905.0 434.4L1044.9 425.1M905.0 435.0L1039.7 427.2M905.0 435.7L1042.7 428.8M905.0 437.0L1039.3 432.3M905.0 437.6L1039.7 433.8M905.0 438.3L1037.7 435.4M905.0 438.9L1030.6 436.2M905.0 440.2L1031.0 437.2M905.0 440.9L1026.4 437.8M905.0 441.5L1022.1 438.5M905.0 442.1L1027.2 438.9M905.0 443.4L1021.8 440.2M905.0 444.1L1021.2 440.8M905.0 444.7L1017.7 441.4M905.0 445.4L1017.6 442.2M905.0 446.7L1015.1 446.2" stroke="#66ff00" stroke-width="1.6" fill="none"/><path d="M905.0 426.6L1026.9 406.1M905.0 429.9L1038.0 413.3M905.0 433.1L1044.8 421.5M905.0 436.3L1043.6 430.5M905.0 439.6L1034.4 436.6M905.0 442.8L1021.8 439.6M905.0 446.0L1012.4 444.3" stroke="#5fd410" stroke-width="1" fill="none"/><polygon points="424.2,448.1 443.2,445.9 478.7,442.9 511.7,442.9 522.7,444.4 541.1,445.9 565.6,448.1 575.0,449.0 590.3,448.2 606.0,445.0 619.2,442.0 637.0,439.3 667.4,437.2 684.6,436.8 685.3,439.1 701.9,441.5 705.8,444.6 705.8,453.6 704.1,469.2 706.5,477.0 704.1,482.6 691.8,486.5 675.6,490.4 655.0,493.2 642.6,494.4 601.3,498.5 587.3,501.5 575.0,506.5 555.8,514.5 537.4,520.6 519.0,524.9 500.7,527.9 473.8,532.2 454.2,535.0 446.2,535.5 427.9,516.9 426.0,491.2" fill="#66ff00" /><path d="M723.4 434.4 L810 430.4 L865 427.6 L909 425 M998 405.6 L1025.3 402.4 M723.4 479.8 L782.6 468.8 L837.7 459.2 L876.3 451.5 L903.8 446.9 L975 446.9" stroke="#5ac812" stroke-width="1.5" fill="none"/><path d="M740 434.6 L890 429.2 L1044 425" stroke="#5cbc18" stroke-width="1.6" stroke-dasharray="14 5" fill="none"/><path d="M940 420 L1032 411 M950 432 L1038 433 M930 440 L1020 441" stroke="#7aff2a" stroke-width="1" fill="none" opacity="0.7"/><path d="M702 443 L706 452 L704.6 465.4 L707.3 476.4 L703 483.3" stroke="#80d040" stroke-width="1" fill="none" opacity="0.6"/><path d="M534.5 460 L535 500 M596 452 L600 490 M603 450 L601 494 M643 441 L645 492 M665 438 L667 490" stroke="#5ce600" stroke-width="1" fill="none" opacity="0.8"/></g>
</svg>
<span class="t" style="left:506.3px;top:8.0px;font-size:13px;line-height:16px;font-weight:700;color:#8b8b8b;transform:scaleX(1.0947)">Simulation snapshots @ 530.5nm</span>
<span class="t" style="left:65.8px;top:70.9px;font-size:13px;line-height:16px;font-weight:400;color:#34347a;-webkit-text-stroke:0.22px #34347a;transform:scaleX(1.0923)">Plot</span>
<span class="t" style="left:112.3px;top:67.1px;font-size:13px;line-height:16px;font-weight:400;color:#34347a;-webkit-text-stroke:0.22px #34347a;transform:scaleX(1.0840)">Scale</span>
<span class="t" style="left:37.3px;top:162.8px;font-size:13px;line-height:16px;font-weight:400;color:#111;-webkit-text-stroke:0.22px #111;transform:scaleX(1.0719)">Pointer</span>
<span class="t" style="left:101.7px;top:162.8px;font-size:13px;line-height:16px;font-weight:400;color:#111;-webkit-text-stroke:0.22px #111;transform:scaleX(1.1234)">Zoom</span>
<span class="t" style="left:155.5px;top:162.8px;font-size:13px;line-height:16px;font-weight:400;color:#111;-webkit-text-stroke:0.22px #111;transform:scaleX(1.0930)">Move</span>
<span class="t" style="left:207.4px;top:162.8px;font-size:13px;line-height:16px;font-weight:400;color:#111;-webkit-text-stroke:0.22px #111;transform:scaleX(1.1275)">Rotate</span>
<span class="t" style="left:268.5px;top:162.8px;font-size:13px;line-height:16px;font-weight:400;color:#111;-webkit-text-stroke:0.22px #111;transform:scaleX(1.0534)">Colors</span>
<span class="t" style="left:1090.5px;top:154.9px;font-size:13px;line-height:16px;font-weight:400;color:#111;-webkit-text-stroke:0.22px #111;transform:scaleX(1.0476)">Save</span>
<span class="t" style="left:1089.0px;top:170.1px;font-size:13px;line-height:16px;font-weight:400;color:#111;-webkit-text-stroke:0.22px #111;transform:scaleX(1.1119)">video</span>
<span class="t" style="left:1144.5px;top:154.9px;font-size:13px;line-height:16px;font-weight:400;color:#111;-webkit-text-stroke:0.22px #111;transform:scaleX(1.1158)">Storyboard</span>
<span class="t" style="left:1141.8px;top:170.1px;font-size:13px;line-height:16px;font-weight:400;color:#111;-webkit-text-stroke:0.22px #111;transform:scaleX(1.1377)">to clipboard</span>
<span class="t" style="left:1238.5px;top:162.7px;font-size:13px;line-height:16px;font-weight:400;color:#111;-webkit-text-stroke:0.22px #111;transform:scaleX(1.0650)">Play</span>
<span class="t" style="left:909.4px;top:101.9px;font-size:28px;line-height:35px;font-weight:400;color:#000;-webkit-text-stroke:0.35px #000;transform:scaleX(1.0429)">xy</span>
<span class="t" style="left:951.0px;top:101.9px;font-size:28px;line-height:35px;font-weight:400;color:#000;-webkit-text-stroke:0.35px #000;transform:scaleX(1.0185)">yz</span>
<span class="t" style="left:909.4px;top:148.9px;font-size:28px;line-height:35px;font-weight:400;color:#000;-webkit-text-stroke:0.35px #000;transform:scaleX(1.0296)">xz</span>
<span class="t" style="left:33.2px;top:674.0px;font-size:13px;line-height:16px;font-weight:400;color:#111;-webkit-text-stroke:0.22px #111;transform:scaleX(1.1282)">Path: /home/rod/Desktop/cooke-test/new/1.3e-2/1.06e-2/ray_trace/1/ray_.csv</span>
<span class="t" style="left:34.3px;top:696.9px;font-size:13px;line-height:16px;font-weight:400;color:#111;-webkit-text-stroke:0.22px #111;transform:scaleX(1.0526)">z:</span>
<span class="t" style="left:1264.0px;top:757.9px;font-size:13px;line-height:16px;font-weight:400;color:#111;-webkit-text-stroke:0.22px #111;transform:scaleX(1.0000)">1</span>
<span class="t" style="left:205.3px;top:846.5px;font-size:13px;line-height:16px;font-weight:400;color:#111;-webkit-text-stroke:0.22px #111;transform:scaleX(1.1371)">File to plot</span>
<span class="t" style="left:460.0px;top:846.5px;font-size:13px;line-height:16px;font-weight:400;color:#111;-webkit-text-stroke:0.22px #111;transform:scaleX(1.1630)">Plot type</span>
<span class="t" style="left:29.2px;top:871.8px;font-size:13px;line-height:16px;font-weight:400;color:#111;-webkit-text-stroke:0.22px #111;transform:scaleX(0.8571)">1</span>
<span class="t" style="left:45.6px;top:871.8px;font-size:13px;line-height:16px;font-weight:400;color:#111;-webkit-text-stroke:0.22px #111;transform:scaleX(1.0593)">ray_.csv</span>
<span class="t" style="left:445.6px;top:871.6px;font-size:13px;line-height:16px;font-weight:400;color:#111;-webkit-text-stroke:0.22px #111;transform:scaleX(1.1153)">Wireframe</span>
<span class="t" style="left:22.0px;top:997.3px;font-size:13px;line-height:16px;font-weight:400;color:#111;-webkit-text-stroke:0.22px #111;transform:scaleX(1.1337)">/home/rod/Desktop/cooke-test/new/ray_trace</span>
</div>
</div>
</body></html>
